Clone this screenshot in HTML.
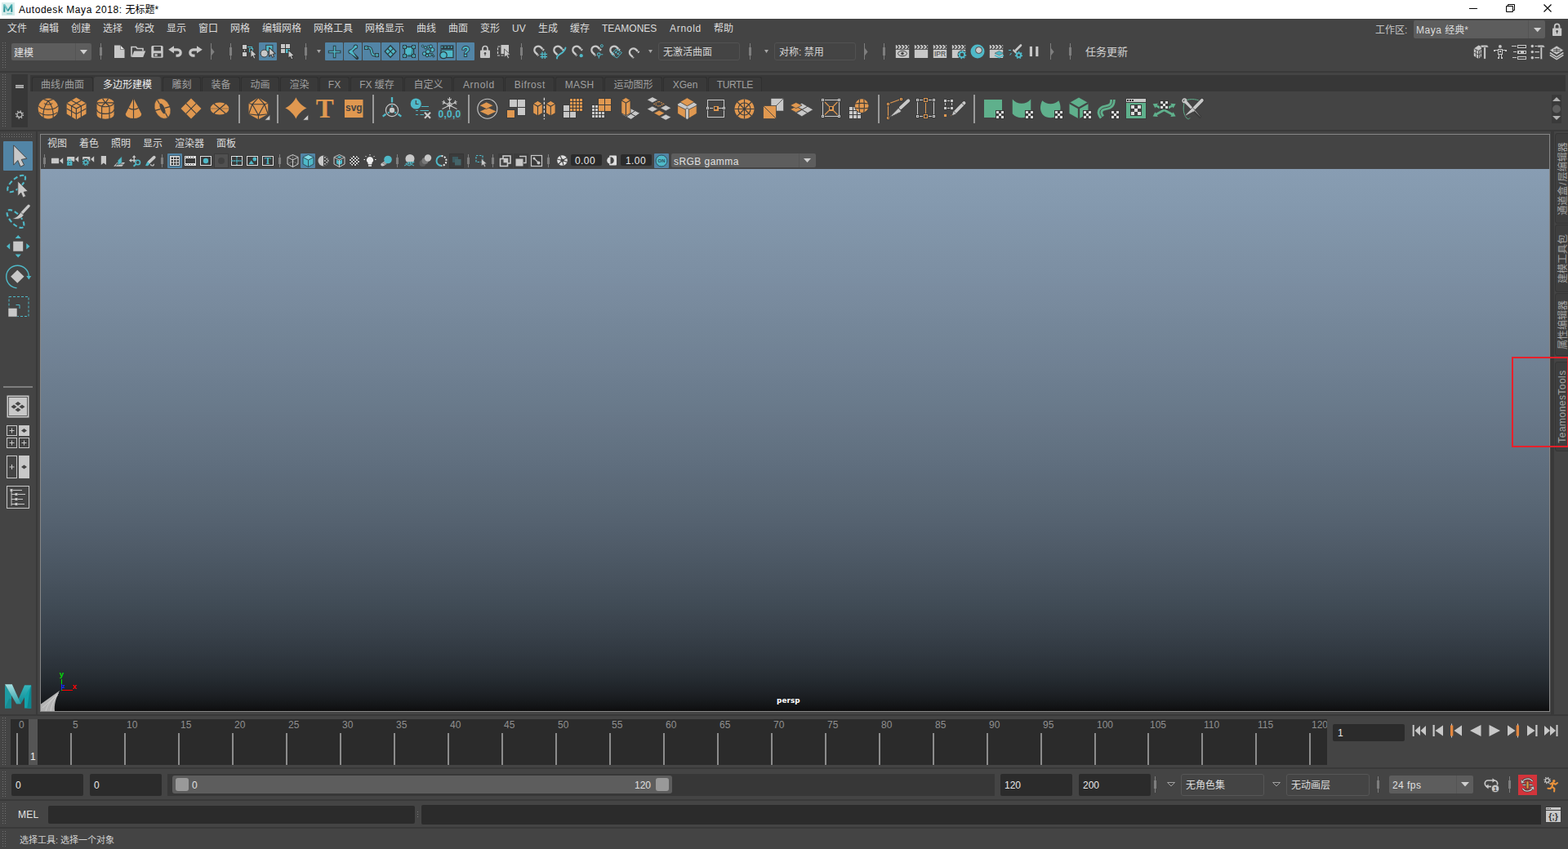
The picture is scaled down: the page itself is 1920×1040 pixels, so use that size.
<!DOCTYPE html>
<html lang="zh-CN">
<head>
<meta charset="utf-8">
<title>Autodesk Maya 2018: 无标题*</title>
<style>
html,body{margin:0;padding:0;}
body{width:1920px;height:1040px;overflow:hidden;background:#444444;font-family:"Liberation Sans","Noto Sans CJK SC",sans-serif;font-size:12px;color:#eeeeee;}
#app{position:relative;width:1920px;height:1040px;overflow:hidden;background:#444444;}
.a{position:absolute;}
.t{position:absolute;white-space:nowrap;line-height:16px;height:16px;font-size:12px;}
.box{position:absolute;box-sizing:border-box;}
svg{position:absolute;overflow:visible;}
.grip-v{position:absolute;width:5px;background-image:linear-gradient(180deg,transparent 1px,#444 1px),linear-gradient(90deg,transparent 1px,#727272 1px,#727272 2px,transparent 2px);background-size:3px 3px;}
.grip-h{position:absolute;height:5px;background-image:linear-gradient(180deg,transparent 1px,#444 1px,#444 3px,transparent 3px,transparent 4px,#444 4px),linear-gradient(90deg,transparent 1px,#727272 1px,#727272 2px,transparent 2px);background-size:3px 6px,3px 3px;}
.sep{position:absolute;background:#393939;height:3px;left:0;width:1920px;}
.field{position:absolute;background:#2b2b2b;border-radius:2px;}
.dd{position:absolute;background:#5d5d5d;border-radius:2px;}
.hl{position:absolute;background:#5285a6;border-radius:1px;}

</style>
</head>
<body>
<div id="app">
<!-- 01_title.gen.py -->
<div class="a" id="titlebar" style="left:0;top:0;width:1920px;height:23px;background:#ffffff;"></div>
<svg style="left:2px;top:3px" width="16" height="16" viewBox="0 0 16 16">
<defs><linearGradient id="mi" x1="0" y1="0" x2="0" y2="1"><stop offset="0" stop-color="#d9eeec"/><stop offset="1" stop-color="#d3eae8"/></linearGradient>
<linearGradient id="mi2" x1="0" y1="0" x2="0" y2="1"><stop offset="0" stop-color="#4fb3b6"/><stop offset="1" stop-color="#157f85"/></linearGradient></defs>
<rect x="0" y="0" width="16" height="16" fill="url(#mi)"/>
<path d="M2.300 11.800V2.300h1.800l3.700 6.300 3.700-6.300h1.800v9.500h-2V6.300L8.700 10.500H6.900L4.300 6.300v5.500z" fill="url(#mi2)"/>
<path d="M2.300 2.300h1.800l3.700 6.300-.9 1.900z" fill="#7cc9cb" opacity="0.800"/>
<rect x="6.200" y="13" width="7" height="1.500" fill="#7cc5c6" opacity="0.800"/>
</svg>
<span class="t" style="left:23px;top:4px;color:#000;font-size:12px"><span style="letter-spacing:0.55px">Autodesk Maya 2018: </span>无标题*</span>
<svg style="left:1790px;top:0" width="130" height="23" viewBox="0 0 130 23">
<path d="M9 10.5h10" stroke="#000" stroke-width="1" fill="none"/>
<path d="M54.5 7.5h8v7h-8z M56.5 7.5v-2h8v7h-2" stroke="#000" stroke-width="1" fill="none"/>
<path d="M100.5 5.5l9 9M109.5 5.5l-9 9" stroke="#000" stroke-width="1.1" fill="none"/>
</svg>
<div class="a" id="menubar" style="left:0;top:23px;width:1920px;height:24px;">
<span class="t" style="left:9px;top:4px;color:#dcdcdc">文件</span>
<span class="t" style="left:48px;top:4px;color:#dcdcdc">编辑</span>
<span class="t" style="left:87px;top:4px;color:#dcdcdc">创建</span>
<span class="t" style="left:126px;top:4px;color:#dcdcdc">选择</span>
<span class="t" style="left:165px;top:4px;color:#dcdcdc">修改</span>
<span class="t" style="left:204px;top:4px;color:#dcdcdc">显示</span>
<span class="t" style="left:243px;top:4px;color:#dcdcdc">窗口</span>
<span class="t" style="left:282px;top:4px;color:#dcdcdc">网格</span>
<span class="t" style="left:321px;top:4px;color:#dcdcdc">编辑网格</span>
<span class="t" style="left:384px;top:4px;color:#dcdcdc">网格工具</span>
<span class="t" style="left:447px;top:4px;color:#dcdcdc">网格显示</span>
<span class="t" style="left:510px;top:4px;color:#dcdcdc">曲线</span>
<span class="t" style="left:549px;top:4px;color:#dcdcdc">曲面</span>
<span class="t" style="left:588px;top:4px;color:#dcdcdc">变形</span>
<span class="t" style="left:627px;top:4px;color:#dcdcdc">UV</span>
<span class="t" style="left:659px;top:4px;color:#dcdcdc">生成</span>
<span class="t" style="left:698px;top:4px;color:#dcdcdc">缓存</span>
<span class="t" style="left:737px;top:4px;color:#dcdcdc">TEAMONES</span>
<span class="t" style="left:820px;top:4px;color:#dcdcdc"><span style="letter-spacing:0.7px">Arnold</span></span>
<span class="t" style="left:874px;top:4px;color:#dcdcdc">帮助</span>
</div>
<span class="t" style="left:1684px;top:29px;color:#c4c4c4">工作区:</span>
<div class="dd" style="left:1731px;top:25px;width:161px;height:22px;"></div>
<div class="a" style="left:1871px;top:25px;width:1px;height:22px;background:#545454"></div>
<span class="t" style="left:1734px;top:29px;color:#dcdcdc;font-size:12px"><span style="letter-spacing:0.5px">Maya </span>经典*</span>
<svg style="left:1878px;top:34px" width="10" height="6" viewBox="0 0 10 6"><path d="M0 0h9.300L4.650 5.200z" fill="#cfcfcf"/></svg>
<svg style="left:1900px;top:28px" width="13" height="17" viewBox="0 0 13 17">
<path d="M3.700 7V4.300a2.900 2.900 0 0 1 5.800 0V7" stroke="#c8c8c8" stroke-width="1.800" fill="none"/>
<rect x="1" y="6.500" width="11.200" height="9.500" rx="0.800" fill="#c8c8c8"/>
<circle cx="6.600" cy="10.200" r="1.200" fill="#444"/><rect x="6.100" y="10.400" width="1" height="2.800" fill="#444"/>
</svg>
<!-- 02_frame.gen.py -->
<div class="sep" style="top:87px;height:2px"></div>
<div class="sep" style="top:159px;height:2px"></div>
<div class="sep" style="top:875px;height:2px"></div>
<div class="sep" style="top:940px;height:2px"></div>
<div class="sep" style="top:979px;height:2px"></div>
<div class="sep" style="top:1013px;height:2px"></div>
<div class="grip-v" style="left:2px;top:52px;height:31px"></div>
<div class="grip-v" style="left:2px;top:91px;height:64px"></div>
<div class="grip-v" style="left:2px;top:879px;height:58px"></div>
<div class="grip-v" style="left:2px;top:945px;height:31px"></div>
<div class="grip-v" style="left:2px;top:984px;height:25px"></div>
<div class="grip-v" style="left:2px;top:1018px;height:19px"></div>
<div class="grip-h" style="left:1px;top:164px;width:39px;height:4px"></div>
<div class="a" style="left:44px;top:161px;width:2px;height:714px;background:#393939"></div>
<div class="a" style="left:1899px;top:161px;width:4px;height:714px;background:#393939"></div>
<div class="box" id="panel" style="left:49px;top:164px;width:1849px;height:708px;border:1px solid #868686;background:#444"></div>
<div class="a" id="viewport" style="left:50px;top:207px;width:1847px;height:664px;background:linear-gradient(to bottom,#889db3 0.00%,#869bb0 3.31%,#8499ae 6.58%,#8296ab 9.81%,#8094a8 13.00%,#7e91a5 16.14%,#7c8fa3 19.24%,#7a8ca0 22.29%,#788a9d 25.30%,#75879a 28.27%,#738597 31.19%,#718295 34.06%,#6f8092 36.89%,#6c7d8f 39.67%,#6a7b8c 42.41%,#687889 45.09%,#667586 47.73%,#637383 50.32%,#617080 52.86%,#5e6d7d 55.35%,#5c6a79 57.78%,#5a6876 60.17%,#576573 62.51%,#556270 64.79%,#525f6d 67.01%,#505c69 69.18%,#4d5966 71.30%,#4a5662 73.36%,#48535f 75.36%,#45505b 77.30%,#424d58 79.18%,#3f4a54 81.00%,#3d4650 82.76%,#3a434d 84.45%,#374049 86.07%,#343c45 87.63%,#313941 89.12%,#2e353d 90.53%,#2b3239 91.87%,#282e34 93.13%,#242a30 94.31%,#21262b 95.41%,#1e2227 96.41%,#1b1e22 97.32%,#171a1d 98.12%,#141618 98.82%,#111214 99.38%,#0f0f10 99.80%,#0d0d0d 100.00%)"></div>
<span class="t" style="left:951px;top:850px;color:#fff;font-weight:bold;font-size:8.8px;letter-spacing:0.1px;font-family:'DejaVu Sans','Liberation Sans',sans-serif">persp</span>
<!-- 03_status.gen.py -->
<div class="dd" style="left:14px;top:53px;width:98px;height:21px"></div>
<div class="a" style="left:92px;top:53px;width:1px;height:21px;background:#555"></div>
<span class="t" style="left:17px;top:57px;font-size:12px;color:#e0e0e0;">建模</span>
<svg style="left:98px;top:61px" width="9" height="6" viewBox="0 0 9 6" ><path d="M0 0h9L4.5 5.5z" fill="#d0d0d0"/></svg>
<div class="a" style="left:123px;top:53px;width:1px;height:20px;background:#7e7e7e"></div><div class="a" style="left:122px;top:58px;width:3px;height:10px;background:#7e7e7e"></div>
<svg style="left:139px;top:54px" width="15" height="18" viewBox="0 0 15 18" ><path d="M1 1.5h7.5l5 5V17H1z" fill="#c8c8c8"/><path d="M8.5 1.5v5h5z" fill="#e6e6e6" stroke="#555" stroke-width="0.6"/></svg>
<svg style="left:160px;top:55px" width="19" height="16" viewBox="0 0 19 16" ><path d="M1 14.5V2.5h5.5l1.5 2h7v3" fill="none" stroke="#c8c8c8" stroke-width="1.6"/><path d="M1.2 15l3-7.5h14l-3 7.5z" fill="#c8c8c8"/></svg>
<svg style="left:185px;top:55px" width="15" height="16" viewBox="0 0 15 16" ><rect x="0.3" y="1" width="14.4" height="14.7" rx="1.5" fill="#c8c8c8"/><rect x="3.3" y="2" width="8.7" height="5.3" fill="#444"/><rect x="3" y="10.3" width="9.3" height="4.2" fill="#444"/><rect x="4.3" y="11.3" width="3.4" height="2.3" fill="#c8c8c8"/></svg>
<svg style="left:206px;top:56px" width="18" height="14" viewBox="0 0 18 14" ><path d="M7 0.3L0.2 4.8l6.800 4.500z" fill="#c8c8c8"/><path d="M6 4.800h5.500a3.700 3.700 0 0 1 0 7.400H9.500" fill="none" stroke="#c8c8c8" stroke-width="3.200"/></svg>
<svg style="left:230px;top:56px" width="18" height="14" viewBox="0 0 18 14" ><path d="M11 0.3l6.800 4.500-6.800 4.500z" fill="#c8c8c8"/><path d="M12 4.800H6.500a3.700 3.700 0 0 0 0 7.400H8.500" fill="none" stroke="#c8c8c8" stroke-width="3.200"/></svg>
<div class="a" style="left:258px;top:53px;width:1px;height:20px;background:#7e7e7e"></div><svg style="left:259px;top:58.5px" width="4" height="9" viewBox="0 0 4 9" ><path d="M0 0L3.600 4.500L0 9z" fill="#7e7e7e"/></svg>
<div class="a" style="left:282px;top:53px;width:1px;height:20px;background:#7e7e7e"></div><div class="a" style="left:281px;top:58px;width:3px;height:10px;background:#7e7e7e"></div>
<svg style="left:296px;top:54px" width="19" height="19" viewBox="0 0 19 19" ><g shape-rendering="crispEdges"><rect x="0" y="0" width="7" height="7" fill="#3a3a3a"/><rect x="1" y="1" width="5" height="5" fill="#c8c8c8"/><rect x="0" y="9" width="7" height="7" fill="#3a3a3a"/><rect x="1" y="10" width="5" height="5" fill="#c8c8c8"/><rect x="3" y="7" width="1" height="2" fill="#c8c8c8"/><rect x="7" y="3" width="5" height="1" fill="#4fb9c8"/><rect x="12" y="3" width="1" height="2" fill="#4fb9c8"/><rect x="9" y="5" width="5" height="5" fill="#4fb9c8"/><rect x="10" y="6" width="3" height="3" fill="#444"/></g><g transform="translate(10.6,5.6) scale(0.46)"><path d="M0.7 0.9V25.1L5.8 19.5L9.1 27.3L13.6 25.1L10.2 18.4L16.9 17.2z" fill="#c8c8c8" stroke="#3a3a3a" stroke-width="2.200" stroke-linejoin="round"/></g></svg>
<div class="hl" style="left:317px;top:52px;width:22px;height:22px"></div>
<svg style="left:319px;top:54px" width="19" height="19" viewBox="0 0 19 19" ><rect x="6.700" y="1.300" width="8.200" height="7.800" fill="#4fb9c8" stroke="#3a3a3a" stroke-width="1"/><circle cx="4.600" cy="11.500" r="4.500" fill="#c8c8c8" stroke="#3a3a3a" stroke-width="1"/><g transform="translate(10.3,3.8) scale(0.46)"><path d="M0.7 0.9V25.1L5.8 19.5L9.1 27.3L13.6 25.1L10.2 18.4L16.9 17.2z" fill="#c8c8c8" stroke="#3a3a3a" stroke-width="2.200" stroke-linejoin="round"/></g></svg>
<svg style="left:343px;top:53px" width="19" height="21" viewBox="0 0 19 21" ><g shape-rendering="crispEdges"><rect x="0" y="0" width="7" height="7" fill="#3a3a3a"/><rect x="1" y="1" width="5" height="5" fill="#c8c8c8"/><rect x="6" y="0" width="7" height="7" fill="#3a3a3a"/><rect x="7" y="1" width="5" height="5" fill="#c8c8c8"/><rect x="0" y="6" width="7" height="7" fill="#3a3a3a"/><rect x="1" y="7" width="5" height="5" fill="#c8c8c8"/><rect x="6" y="6" width="7" height="7" fill="#3a3a3a"/><rect x="7" y="7" width="5" height="5" fill="#4fb9c8"/></g><g transform="translate(9.7,7.4) scale(0.46)"><path d="M0.7 0.9V25.1L5.8 19.5L9.1 27.3L13.6 25.1L10.2 18.4L16.9 17.2z" fill="#c8c8c8" stroke="#3a3a3a" stroke-width="2.200" stroke-linejoin="round"/></g></svg>
<div class="a" style="left:374px;top:53px;width:1px;height:20px;background:#7e7e7e"></div><div class="a" style="left:373px;top:58px;width:3px;height:10px;background:#7e7e7e"></div>
<svg style="left:388px;top:61px" width="5" height="4" viewBox="0 0 5 4" ><path d="M0 0h5L2.5 4z" fill="#a8a8a8"/></svg>
<div class="hl" style="left:398px;top:52px;width:22px;height:22px"></div>
<svg style="left:398px;top:52px" width="22" height="22" viewBox="0 0 22 22" ><path d="M11.600 3.700v15.600M3.800 11.500h15.600" stroke="#2c3a3f" stroke-width="3.600"/><path d="M11.600 4.700v13.600M4.800 11.500h13.600" stroke="#4fb9c8" stroke-width="1.600"/></svg>
<div class="hl" style="left:421px;top:52px;width:22px;height:22px"></div>
<svg style="left:421px;top:52px" width="22" height="22" viewBox="0 0 22 22" ><path d="M14.500 5.500L8.500 11.300 16.300 19.200" fill="none" stroke="#2c3a3f" stroke-width="3.800" stroke-linecap="round" stroke-linejoin="round"/><circle cx="14.500" cy="5.300" r="2.700" fill="#2c3a3f"/><circle cx="8.300" cy="11.300" r="2.900" fill="#2c3a3f"/><path d="M14.500 5.300L8.300 11.300" stroke="#4fb9c8" stroke-width="2" stroke-linecap="round"/><path d="M7 12.500l3-2.500 6.300 9.200z" fill="#4fb9c8"/><circle cx="14.500" cy="5.300" r="1.700" fill="#4fb9c8"/><circle cx="8.300" cy="11.300" r="1.900" fill="#4fb9c8"/></svg>
<div class="hl" style="left:444px;top:52px;width:22px;height:22px"></div>
<svg style="left:444px;top:52px" width="22" height="22" viewBox="0 0 22 22" ><path d="M6 6.500h2c4.500 0 1.500 9 6 9h2" fill="none" stroke="#2c3a3f" stroke-width="3.600"/><path d="M6 6.500h2c4.500 0 1.500 9 6 9h2" fill="none" stroke="#4fb9c8" stroke-width="1.600"/><g shape-rendering="crispEdges"><rect x="2" y="4" width="5" height="5" fill="#2c3a3f"/><rect x="3" y="5" width="3" height="3" fill="#4fb9c8"/><rect x="15" y="13" width="5" height="5" fill="#2c3a3f"/><rect x="16" y="14" width="3" height="3" fill="#4fb9c8"/><rect x="4" y="6" width="1" height="1" fill="#2c3a3f"/><rect x="17" y="15" width="1" height="1" fill="#2c3a3f"/></g></svg>
<div class="hl" style="left:467px;top:52px;width:22px;height:22px"></div>
<svg style="left:467px;top:52px" width="22" height="22" viewBox="0 0 22 22" ><path d="M11.100 3.800L18 11 11.100 18.200 4.200 11z" fill="#4fb9c8" stroke="#2c3a3f" stroke-width="1.300"/><path d="M7.600 7.400l7 7.200M14.600 7.400l-7 7.200" stroke="#2c3a3f" stroke-width="1.200"/></svg>
<div class="hl" style="left:490px;top:52px;width:22px;height:22px"></div>
<svg style="left:490px;top:52px" width="22" height="22" viewBox="0 0 22 22" ><rect x="5.500" y="5.500" width="11" height="11" fill="#4fb9c8" stroke="#2c3a3f" stroke-width="1.400"/><path d="M15.500 6.500l-1.500 8.500-8.500 1.500" fill="none" stroke="#35838f" stroke-width="1.600"/><g shape-rendering="crispEdges"><rect x="3" y="3" width="5" height="5" fill="#2c3a3f"/><rect x="4" y="4" width="3" height="3" fill="#4fb9c8"/><rect x="14" y="3" width="5" height="5" fill="#2c3a3f"/><rect x="15" y="4" width="3" height="3" fill="#4fb9c8"/><rect x="3" y="14" width="5" height="5" fill="#2c3a3f"/><rect x="4" y="15" width="3" height="3" fill="#4fb9c8"/><rect x="14" y="14" width="5" height="5" fill="#2c3a3f"/><rect x="15" y="15" width="3" height="3" fill="#4fb9c8"/><rect x="5" y="5" width="1" height="1" fill="#2c3a3f"/><rect x="16" y="5" width="1" height="1" fill="#2c3a3f"/><rect x="5" y="16" width="1" height="1" fill="#2c3a3f"/><rect x="16" y="16" width="1" height="1" fill="#2c3a3f"/></g></svg>
<div class="hl" style="left:513px;top:52px;width:22px;height:22px"></div>
<svg style="left:513px;top:52px" width="22" height="22" viewBox="0 0 22 22" ><g fill="#4fb9c8" stroke="#2c3a3f" stroke-width="1"><circle cx="4.500" cy="4.500" r="1.300"/><circle cx="8" cy="6.300" r="1.600"/><circle cx="11.500" cy="5.500" r="1.600"/><circle cx="14.500" cy="4.800" r="1.900"/><circle cx="16.500" cy="9" r="2.500"/><circle cx="11" cy="11.300" r="2.600"/><circle cx="6.500" cy="13.800" r="2.200"/><circle cx="10" cy="16" r="1.800"/><circle cx="13.500" cy="15.300" r="1.800"/><circle cx="16" cy="14.500" r="1.200"/><circle cx="17.800" cy="16.800" r="1.100"/></g></svg>
<div class="hl" style="left:536px;top:52px;width:22px;height:22px"></div>
<svg style="left:536px;top:52px" width="22" height="22" viewBox="0 0 22 22" ><rect x="3.500" y="3.500" width="16" height="4.500" fill="#2c3a3f"/><path d="M4.500 4.500l2.500 1.300-2.500 1.300zM8.500 4.500l2.500 1.300-2.500 1.300zM12.500 4.500l2.500 1.300-2.500 1.300zM16 4.500l2.500 1.300-2.500 1.300z" fill="#4fb9c8"/><rect x="4" y="9" width="15" height="9.500" fill="#4fb9c8" stroke="#2c3a3f" stroke-width="1.200"/><circle cx="7" cy="15.500" r="4.200" fill="#4fb9c8" stroke="#2c3a3f" stroke-width="1.200"/></svg>
<div class="hl" style="left:559px;top:52px;width:22px;height:22px"></div>
<svg style="left:559px;top:52px" width="22" height="22" viewBox="0 0 22 22" ><text x="11.300" y="17.200" font-family="Liberation Sans,sans-serif" font-size="16" font-weight="bold" text-anchor="middle" fill="#4fb9c8" stroke="#2c3a3f" stroke-width="1.800" paint-order="stroke">?</text></svg>
<svg style="left:588px;top:55px" width="12" height="16" viewBox="0 0 12 16" ><path d="M3 7V4.500a3 3 0 0 1 6 0V7" stroke="#c8c8c8" stroke-width="1.700" fill="none"/><rect x="0" y="6.500" width="12" height="9.500" rx="1" fill="#c8c8c8"/><circle cx="6" cy="10.300" r="1.200" fill="#444"/><rect x="5.500" y="10.500" width="1" height="2.800" fill="#444"/></svg>
<svg style="left:608px;top:54px" width="18" height="19" viewBox="0 0 18 19" ><rect x="5.500" y="1" width="9.500" height="11" fill="#c8c8c8"/><path d="M4.500 3H1.500v11h9" fill="none" stroke="#c8c8c8" stroke-width="1.200" stroke-dasharray="3 1.500"/><path d="M9.500 6l7.500 7-3.200.300 1.800 3.500-1.700.900-1.800-3.600-2.600 2.100z" fill="#c8c8c8" stroke="#444" stroke-width="0.800"/></svg>
<div class="a" style="left:638px;top:53px;width:1px;height:20px;background:#7e7e7e"></div><div class="a" style="left:637px;top:58px;width:3px;height:10px;background:#7e7e7e"></div>
<svg style="left:652px;top:54px" width="19" height="19" viewBox="0 0 19 19" ><g transform="translate(0,0)"><path d="M7.400 14.200L3.400 10.200A4.700 4.700 0 0 1 10 3.600L14 7.600" fill="none" stroke="#c8c8c8" stroke-width="2.400"/><path d="M5.300 13.500l2.500-2.500M11 6.500l2.500-2.500" stroke="#444" stroke-width="0.800" transform="translate(0.600,0.600)"/></g><path d="M12 9.500v8.500M15.300 9.500v8.500M9.500 12.300h8.500M9.500 15.500h8.500" stroke="#4fb9c8" stroke-width="1.300" fill="none"/></svg>
<svg style="left:676px;top:54px" width="19" height="19" viewBox="0 0 19 19" ><g transform="translate(0,0)"><path d="M7.400 14.200L3.400 10.200A4.700 4.700 0 0 1 10 3.600L14 7.600" fill="none" stroke="#c8c8c8" stroke-width="2.400"/><path d="M5.300 13.500l2.500-2.500M11 6.500l2.500-2.500" stroke="#444" stroke-width="0.800" transform="translate(0.600,0.600)"/></g><path d="M6 17.500c-.5-6 8.500-4.500 10.500-13" stroke="#4fb9c8" stroke-width="1.900" fill="none" stroke-linecap="round"/></svg>
<svg style="left:699px;top:54px" width="19" height="19" viewBox="0 0 19 19" ><g transform="translate(0,0)"><path d="M7.400 14.200L3.400 10.200A4.700 4.700 0 0 1 10 3.600L14 7.600" fill="none" stroke="#c8c8c8" stroke-width="2.400"/><path d="M5.300 13.500l2.500-2.500M11 6.500l2.500-2.500" stroke="#444" stroke-width="0.800" transform="translate(0.600,0.600)"/></g><circle cx="12.700" cy="14.200" r="2.100" fill="#4fb9c8"/></svg>
<svg style="left:722px;top:54px" width="19" height="19" viewBox="0 0 19 19" ><g transform="translate(0,0)"><path d="M7.400 14.200L3.400 10.200A4.700 4.700 0 0 1 10 3.600L14 7.600" fill="none" stroke="#c8c8c8" stroke-width="2.400"/><path d="M5.300 13.500l2.500-2.500M11 6.500l2.500-2.500" stroke="#444" stroke-width="0.800" transform="translate(0.600,0.600)"/></g><circle cx="14.900" cy="2.200" r="1.500" fill="none" stroke="#4fb9c8" stroke-width="1"/><circle cx="11.300" cy="12.700" r="1.800" fill="none" stroke="#4fb9c8" stroke-width="1.100"/><path d="M11.300 15v2.500M13.800 12.700h2.500" stroke="#4fb9c8" stroke-width="1.100"/></svg>
<svg style="left:745px;top:54px" width="19" height="19" viewBox="0 0 19 19" ><g transform="translate(0,0)"><path d="M7.400 14.200L3.400 10.200A4.700 4.700 0 0 1 10 3.600L14 7.600" fill="none" stroke="#c8c8c8" stroke-width="2.400"/><path d="M5.300 13.500l2.500-2.500M11 6.500l2.500-2.500" stroke="#444" stroke-width="0.800" transform="translate(0.600,0.600)"/></g><path d="M9.500 6l7 4.500-6 6.500-7-4.500z" fill="none" stroke="#4fb9c8" stroke-width="1"/><path d="M8 9.500l5.500 3.500M10.800 8l-2.800 3.500M13.500 9.800l-2.800 3.500" stroke="#4fb9c8" stroke-width="1"/></svg>
<svg style="left:768px;top:54px" width="19" height="19" viewBox="0 0 19 19" ><g transform="translate(0.5,2.8)"><path d="M7.400 14.200L3.400 10.200A4.700 4.700 0 0 1 10 3.600L14 7.600" fill="none" stroke="#c8c8c8" stroke-width="2.400"/><path d="M5.300 13.500l2.500-2.500M11 6.500l2.500-2.500" stroke="#444" stroke-width="0.800" transform="translate(0.600,0.600)"/></g></svg>
<svg style="left:794px;top:61px" width="5" height="4" viewBox="0 0 5 4" ><path d="M0 0h5L2.5 4z" fill="#a8a8a8"/></svg>
<div class="box" style="left:806px;top:52px;width:100px;height:22px;border:1px solid #525252;border-radius:3px"></div>
<span class="t" style="left:812px;top:56px;font-size:12px;color:#d4d4d4;">无激活曲面</span>
<div class="a" style="left:918px;top:53px;width:1px;height:20px;background:#7e7e7e"></div><div class="a" style="left:917px;top:58px;width:3px;height:10px;background:#7e7e7e"></div>
<svg style="left:936px;top:61px" width="5" height="4" viewBox="0 0 5 4" ><path d="M0 0h5L2.5 4z" fill="#a8a8a8"/></svg>
<div class="box" style="left:948px;top:52px;width:100px;height:22px;border:1px solid #525252;border-radius:3px"></div>
<span class="t" style="left:954px;top:56px;font-size:12px;color:#d4d4d4;">对称: 禁用</span>
<div class="a" style="left:1058px;top:53px;width:1px;height:20px;background:#7e7e7e"></div><svg style="left:1059px;top:58.5px" width="4" height="9" viewBox="0 0 4 9" ><path d="M0 0L3.600 4.500L0 9z" fill="#7e7e7e"/></svg>
<div class="a" style="left:1082px;top:53px;width:1px;height:20px;background:#7e7e7e"></div><div class="a" style="left:1081px;top:58px;width:3px;height:10px;background:#7e7e7e"></div>
<svg style="left:1096px;top:54px" width="18" height="18" viewBox="0 0 18 18" ><rect x="0.400" y="0.600" width="17.200" height="16.800" fill="#3c3c3c"/><rect x="0.800" y="1" width="16.400" height="4.900" fill="#c8c8c8"/><path d="M1.6 1h1.700l2.100 2.450-2.100 2.450h-1.700l2.100-2.450z" fill="#444"/><path d="M5.7 1h1.700l2.100 2.450-2.100 2.450h-1.700l2.100-2.450z" fill="#444"/><path d="M9.8 1h1.700l2.100 2.450-2.100 2.450h-1.700l2.100-2.450z" fill="#444"/><path d="M13.9 1h1.700l2.100 2.450-2.100 2.450h-1.700l2.100-2.450z" fill="#444"/><rect x="0.800" y="6.800" width="16.400" height="10.200" fill="#c8c8c8"/><ellipse cx="9" cy="11.500" rx="5.500" ry="3.200" fill="none" stroke="#444" stroke-width="1"/><circle cx="9" cy="11.500" r="1.800" fill="#444"/></svg>
<svg style="left:1119px;top:54px" width="18" height="18" viewBox="0 0 18 18" ><rect x="0.400" y="0.600" width="17.200" height="16.800" fill="#3c3c3c"/><rect x="0.800" y="1" width="16.400" height="4.900" fill="#c8c8c8"/><path d="M1.6 1h1.700l2.100 2.450-2.100 2.450h-1.700l2.100-2.450z" fill="#444"/><path d="M5.7 1h1.700l2.100 2.450-2.100 2.450h-1.700l2.100-2.450z" fill="#444"/><path d="M9.8 1h1.700l2.100 2.450-2.100 2.450h-1.700l2.100-2.450z" fill="#444"/><path d="M13.9 1h1.700l2.100 2.450-2.100 2.450h-1.700l2.100-2.450z" fill="#444"/><rect x="0.800" y="6.800" width="16.400" height="10.200" fill="#c8c8c8"/></svg>
<svg style="left:1142px;top:54px" width="18" height="18" viewBox="0 0 18 18" ><rect x="0.400" y="0.600" width="17.200" height="16.800" fill="#3c3c3c"/><rect x="0.800" y="1" width="16.400" height="4.900" fill="#c8c8c8"/><path d="M1.6 1h1.700l2.100 2.450-2.100 2.450h-1.700l2.100-2.450z" fill="#444"/><path d="M5.7 1h1.700l2.100 2.450-2.100 2.450h-1.700l2.100-2.450z" fill="#444"/><path d="M9.8 1h1.700l2.100 2.450-2.100 2.450h-1.700l2.100-2.450z" fill="#444"/><path d="M13.9 1h1.700l2.100 2.450-2.100 2.450h-1.700l2.100-2.450z" fill="#444"/><rect x="0.800" y="6.800" width="16.400" height="10.200" fill="#c8c8c8"/><text x="9" y="15.300" font-family="Liberation Sans,sans-serif" font-size="8.500" text-anchor="middle" fill="#3a3a3a">IPR</text></svg>
<svg style="left:1165px;top:54px" width="18" height="18" viewBox="0 0 18 18" ><rect x="0.400" y="0.600" width="17.200" height="16.800" fill="#3c3c3c"/><rect x="0.800" y="1" width="16.400" height="4.900" fill="#c8c8c8"/><path d="M1.6 1h1.700l2.100 2.450-2.100 2.450h-1.700l2.100-2.450z" fill="#444"/><path d="M5.7 1h1.700l2.100 2.450-2.100 2.450h-1.700l2.100-2.450z" fill="#444"/><path d="M9.8 1h1.700l2.100 2.450-2.100 2.450h-1.700l2.100-2.450z" fill="#444"/><path d="M13.9 1h1.700l2.100 2.450-2.100 2.450h-1.700l2.100-2.450z" fill="#444"/><rect x="0.800" y="6.800" width="16.400" height="10.200" fill="#c8c8c8"/><circle cx="13" cy="13" r="5.500" fill="#444"/><circle cx="13" cy="13" r="3.2" fill="none" stroke="#4fb9c8" stroke-width="2"/><circle cx="13" cy="13" r="4.5" fill="none" stroke="#4fb9c8" stroke-width="1.600" stroke-dasharray="1.500 1.950"/></svg>
<svg style="left:1188px;top:54px" width="18" height="18" viewBox="0 0 18 18" ><circle cx="9" cy="9" r="8.500" fill="#4fb9c8"/><circle cx="10.500" cy="7.500" r="4" fill="#c8c8c8" stroke="#444" stroke-width="1"/></svg>
<svg style="left:1211px;top:54px" width="18" height="18" viewBox="0 0 18 18" ><rect x="0.400" y="0.600" width="17.200" height="16.800" fill="#3c3c3c"/><rect x="0.800" y="1" width="16.400" height="4.900" fill="#c8c8c8"/><path d="M1.6 1h1.700l2.100 2.450-2.100 2.450h-1.700l2.100-2.450z" fill="#444"/><path d="M5.7 1h1.700l2.100 2.450-2.100 2.450h-1.700l2.100-2.450z" fill="#444"/><path d="M9.8 1h1.700l2.100 2.450-2.100 2.450h-1.700l2.100-2.450z" fill="#444"/><path d="M13.9 1h1.700l2.100 2.450-2.100 2.450h-1.700l2.100-2.450z" fill="#444"/><rect x="0.800" y="6.800" width="16.400" height="10.200" fill="#c8c8c8"/><path d="M12.500 8.500l5.500 2.700-5.500 2.700L7 11.200z" fill="#4fb9c8" stroke="#444" stroke-width="0.500"/><path d="M7 13.800l5.500 2.700 5.500-2.700" fill="none" stroke="#4fb9c8" stroke-width="1.700"/></svg>
<svg style="left:1234px;top:54px" width="19" height="18" viewBox="0 0 19 18" ><path d="M16 1.500l-6 6" stroke="#c8c8c8" stroke-width="2.600" stroke-linecap="round"/><path d="M7 6l4.500 4.500-2 1L6 8z" fill="#c8c8c8"/><path d="M1 7.500h3M2.500 13.500l2-2.500" stroke="#4fb9c8" stroke-width="1.100"/><circle cx="13.5" cy="13.5" r="2.6" fill="none" stroke="#4fb9c8" stroke-width="2"/><circle cx="13.5" cy="13.5" r="3.9000000000000004" fill="none" stroke="#4fb9c8" stroke-width="1.600" stroke-dasharray="1.500 1.950"/></svg>
<svg style="left:1260px;top:56px" width="12" height="14" viewBox="0 0 12 14" ><rect x="0.400" y="0.500" width="4" height="13" fill="#3c3c3c"/><rect x="7.800" y="0.500" width="4" height="13" fill="#3c3c3c"/><rect x="0.800" y="0.900" width="3.200" height="12.200" fill="#c8c8c8"/><rect x="8.200" y="0.900" width="3.200" height="12.200" fill="#c8c8c8"/></svg>
<div class="a" style="left:1286px;top:53px;width:1px;height:20px;background:#7e7e7e"></div><svg style="left:1287px;top:58.5px" width="4" height="9" viewBox="0 0 4 9" ><path d="M0 0L3.600 4.500L0 9z" fill="#7e7e7e"/></svg>
<div class="a" style="left:1310px;top:53px;width:1px;height:20px;background:#7e7e7e"></div><div class="a" style="left:1309px;top:58px;width:3px;height:10px;background:#7e7e7e"></div>
<span class="t" style="left:1329px;top:56px;font-size:13px;color:#d0d0d0;">任务更新</span>
<svg style="left:1804px;top:54px" width="20" height="19" viewBox="0 0 20 19" ><path d="M.8 5.500L6.500 1.500l3.500 1.600v12l-3.500 2.800L.8 14.500z" fill="#c8c8c8"/><path d="M.8 5.500l5.700 2.800 3.500-2M6.500 8.300v9.600M.8 10l5.700 3 3.500-2.200M3.600 6.900v9.300M8.300 7v9.500" stroke="#444" stroke-width="0.900" fill="none"/><path d="M9.300 1.200h7.800l1.900 2.900H9.300z" fill="#c8c8c8" stroke="#444" stroke-width="0.500"/><rect x="12.900" y="3.900" width="2.300" height="14.200" fill="#c8c8c8" stroke="#444" stroke-width="0.400"/></svg>
<svg style="left:1828px;top:54px" width="18" height="19" viewBox="0 0 18 19" ><circle cx="8.900" cy="2.900" r="1.900" fill="#c8c8c8"/><g shape-rendering="crispEdges"><rect x="3" y="7" width="12" height="1" fill="#c8c8c8"/><rect x="1" y="7" width="2" height="2" fill="#c8c8c8"/><rect x="15" y="7" width="2" height="2" fill="#c8c8c8"/><rect x="6" y="6" width="6" height="7" fill="#c8c8c8"/><rect x="7" y="7" width="4" height="5" fill="#444"/><rect x="8" y="8" width="2" height="2" fill="#c8c8c8"/><rect x="7" y="13" width="1" height="4" fill="#c8c8c8"/><rect x="10" y="13" width="1" height="4" fill="#c8c8c8"/><rect x="6" y="16" width="2" height="2" fill="#c8c8c8"/><rect x="10" y="16" width="2" height="2" fill="#c8c8c8"/></g></svg>
<svg style="left:1850px;top:54px" width="20" height="20" viewBox="0 0 20 20" ><g shape-rendering="crispEdges"><rect x="1" y="2" width="6" height="1" fill="#c8c8c8"/><rect x="8" y="1" width="11" height="4" fill="#c8c8c8"/><rect x="9" y="2" width="9" height="2" fill="#444"/><rect x="3" y="9" width="4" height="1" fill="#c8c8c8"/><rect x="8" y="8" width="11" height="4" fill="#c8c8c8"/><rect x="10" y="9" width="2" height="2" fill="#444"/><rect x="16" y="9" width="2" height="2" fill="#444"/><rect x="2" y="16" width="5" height="1" fill="#c8c8c8"/><rect x="8" y="15" width="11" height="4" fill="#c8c8c8"/><rect x="9" y="16" width="9" height="2" fill="#444"/></g></svg>
<svg style="left:1874px;top:54px" width="20" height="20" viewBox="0 0 20 20" ><g fill="#c8c8c8"><circle cx="2.300" cy="2.500" r="1.700"/><circle cx="2.300" cy="9.600" r="1.700"/><circle cx="2.300" cy="16.700" r="1.700"/></g><path d="M5.400 2.500h3.500M5.400 9.600h5.500M5.400 16.700h5.500" stroke="#c8c8c8" stroke-width="1.200"/><path d="M8.800 1.200h7.200l2 2.800H8.800z" fill="#c8c8c8" stroke="#444" stroke-width="0.500"/><rect x="12.100" y="3.900" width="2.300" height="14.600" fill="#c8c8c8" stroke="#444" stroke-width="0.400"/></svg>
<svg style="left:1897px;top:54px" width="19" height="20" viewBox="0 0 19 20" ><path d="M.8 13.300l8.300 5.300 8.300-5.300M.8 10.500l8.300 5.300 8.300-5.300" fill="none" stroke="#c8c8c8" stroke-width="1.500"/><path d="M9.100 2.100l8.400 5.500-8.400 5.500L.7 7.600z" fill="#c8c8c8" stroke="#444" stroke-width="0.600"/><path d="M5 6.700h8.500M5 8.700h8.500M9.100 5v5.300" stroke="#444" stroke-width="0.900"/></svg>
<!-- 04_shelf.gen.py -->
<div class="a" style="left:14px;top:91px;width:20px;height:65px;background:#373737"></div>
<svg style="left:19px;top:103px" width="10" height="6" viewBox="0 0 10 6" ><rect x="0" y="1" width="10" height="1.700" fill="#b8b8b8"/><rect x="0" y="3.300" width="10" height="1.700" fill="#b8b8b8"/></svg>
<svg style="left:18px;top:135px" width="12" height="12" viewBox="0 0 12 12" ><circle cx="6" cy="5.500" r="3" fill="none" stroke="#bcbcbc" stroke-width="1.300"/><circle cx="6" cy="5.500" r="4.500" fill="none" stroke="#bcbcbc" stroke-width="1.400" stroke-dasharray="1.400 2.130"/></svg>
<div class="a" style="left:37px;top:92px;width:1880px;height:20px;background:#373737"></div>
<div class="box" style="left:39px;top:94px;width:75px;height:18px;background:#393939;border:1px solid #2f2f2f;border-bottom:none;border-radius:3px 3px 0 0;text-align:center;line-height:19px;color:#a0a0a0;font-size:12px">曲线<span style="padding:0 0.8px">/</span>曲面</div>
<div class="box" style="left:115px;top:94px;width:82px;height:19px;background:#444;border-radius:3px 3px 0 0;text-align:center;line-height:21px;color:#eeeeee;font-size:12px">多边形建模</div>
<div class="box" style="left:199px;top:94px;width:47px;height:18px;background:#393939;border:1px solid #2f2f2f;border-bottom:none;border-radius:3px 3px 0 0;text-align:center;line-height:19px;color:#a0a0a0;font-size:12px">雕刻</div>
<div class="box" style="left:247px;top:94px;width:47px;height:18px;background:#393939;border:1px solid #2f2f2f;border-bottom:none;border-radius:3px 3px 0 0;text-align:center;line-height:19px;color:#a0a0a0;font-size:12px">装备</div>
<div class="box" style="left:295px;top:94px;width:47px;height:18px;background:#393939;border:1px solid #2f2f2f;border-bottom:none;border-radius:3px 3px 0 0;text-align:center;line-height:19px;color:#a0a0a0;font-size:12px">动画</div>
<div class="box" style="left:343px;top:94px;width:47px;height:18px;background:#393939;border:1px solid #2f2f2f;border-bottom:none;border-radius:3px 3px 0 0;text-align:center;line-height:19px;color:#a0a0a0;font-size:12px">渲染</div>
<div class="box" style="left:391px;top:94px;width:37px;height:18px;background:#393939;border:1px solid #2f2f2f;border-bottom:none;border-radius:3px 3px 0 0;text-align:center;line-height:19px;color:#a0a0a0;font-size:12px">FX</div>
<div class="box" style="left:429px;top:94px;width:65px;height:18px;background:#393939;border:1px solid #2f2f2f;border-bottom:none;border-radius:3px 3px 0 0;text-align:center;line-height:19px;color:#a0a0a0;font-size:12px">FX 缓存</div>
<div class="box" style="left:495px;top:94px;width:59px;height:18px;background:#393939;border:1px solid #2f2f2f;border-bottom:none;border-radius:3px 3px 0 0;text-align:center;line-height:19px;color:#a0a0a0;font-size:12px">自定义</div>
<div class="box" style="left:555px;top:94px;width:62px;height:18px;background:#393939;border:1px solid #2f2f2f;border-bottom:none;border-radius:3px 3px 0 0;text-align:center;line-height:19px;color:#a0a0a0;font-size:12px"><span style="letter-spacing:0.7px;margin-right:-0.7px">Arnold</span></div>
<div class="box" style="left:618px;top:94px;width:61px;height:18px;background:#393939;border:1px solid #2f2f2f;border-bottom:none;border-radius:3px 3px 0 0;text-align:center;line-height:19px;color:#a0a0a0;font-size:12px"><span style="letter-spacing:0.6px;margin-right:-0.6px">Bifrost</span></div>
<div class="box" style="left:680px;top:94px;width:59px;height:18px;background:#393939;border:1px solid #2f2f2f;border-bottom:none;border-radius:3px 3px 0 0;text-align:center;line-height:19px;color:#a0a0a0;font-size:12px"><span style="letter-spacing:0.3px;margin-right:-0.3px">MASH</span></div>
<div class="box" style="left:740px;top:94px;width:71px;height:18px;background:#393939;border:1px solid #2f2f2f;border-bottom:none;border-radius:3px 3px 0 0;text-align:center;line-height:19px;color:#a0a0a0;font-size:12px">运动图形</div>
<div class="box" style="left:812px;top:94px;width:54px;height:18px;background:#393939;border:1px solid #2f2f2f;border-bottom:none;border-radius:3px 3px 0 0;text-align:center;line-height:19px;color:#a0a0a0;font-size:12px">XGen</div>
<div class="box" style="left:867px;top:94px;width:66px;height:18px;background:#393939;border:1px solid #2f2f2f;border-bottom:none;border-radius:3px 3px 0 0;text-align:center;line-height:19px;color:#a0a0a0;font-size:12px"><span style="letter-spacing:-0.4px;margin-right:0.4px">TURTLE</span></div>
<svg style="left:46px;top:120px" width="26" height="26" viewBox="0 0 26 26" ><circle cx="13.1" cy="13" r="12.4" fill="#e09850"/><path d="M1.300 9.800C5 15.500 21 15.500 24.900 9.800M2.200 17.600C7 22 19 22 24 17.600M8 6.600C10 8.400 16 8.400 18.200 6.600M13.100 3.600C9 8 6.500 14 7 24M13.100 3.600C17 8 19.700 14 19.200 24M13.100 3.600L7.600 1.800M13.100 3.600L18.600 1.800" stroke="#3e3e3e" stroke-width="1.150" fill="none"/></svg>
<svg style="left:81px;top:119px" width="26" height="28" viewBox="0 0 26 28" ><path d="M12.400 .5L24.500 7.400V20.600L12.400 27.400.7 20.600V7.400z" fill="#e09850"/><path d="M.7 7.400L12.400 14.100 24.500 7.400M12.400 14.100V27.400M6.600 4L18.400 10.800V24M18.400 4L6.600 10.800V24M.7 14L12.400 20.700 24.500 14" stroke="#3e3e3e" stroke-width="1.150" fill="none"/></svg>
<svg style="left:118px;top:120px" width="23" height="26" viewBox="0 0 23 26" ><path d="M.6 5.600a10.500 5.100 0 0 1 21 0v15a10.500 5.100 0 0 1-21 0z" fill="#e09850"/><path d="M.6 5.600a10.500 5.100 0 0 0 21 0M.6 14.300a10.500 5.100 0 0 0 21 0M6.600 10v15.500M16 10v15.500M.6 5.800h21M11.100 5.800L7.600 .8M11.100 5.800L14.600 .8M11.100 5.800L6.600 10M11.100 5.800L16 10" stroke="#3e3e3e" stroke-width="1.150" fill="none"/></svg>
<svg style="left:153px;top:120px" width="21" height="26" viewBox="0 0 21 26" ><path d="M10.500 .3L20.300 19.800a9.800 5.300 0 0 1-19.600 0z" fill="#e09850"/><path d="M10.500 .5v25M4.500 12.300c3.500 2.500 8.500 2.500 12 0" stroke="#3e3e3e" stroke-width="1.150" fill="none"/></svg>
<svg style="left:188px;top:120px" width="22" height="26" viewBox="0 0 22 26" ><g transform="rotate(-24 11 13)"><ellipse cx="11" cy="13" rx="9.300" ry="12.800" fill="#e09850" stroke="#444" stroke-width="0.500"/><ellipse cx="11" cy="13" rx="2.600" ry="6.800" fill="#444"/><path d="M9.500 .8l.5 5.800M12 19.500l.5 5.800M1.800 11.500l6.600 1M13.600 13.500l6.600 1" stroke="#3e3e3e" stroke-width="1.150" fill="none"/></g></svg>
<svg style="left:221px;top:120px" width="26" height="26" viewBox="0 0 26 26" ><path d="M13 .5L25.500 13 13 25.500.5 13z" fill="#e09850"/><path d="M6.700 6.700l12.600 12.600M19.300 6.700L6.700 19.300" stroke="#3e3e3e" stroke-width="1.150" fill="none"/></svg>
<svg style="left:257px;top:125px" width="24" height="16" viewBox="0 0 24 16" ><ellipse cx="12" cy="8" rx="11.300" ry="7.600" fill="#e09850"/><path d="M.7 8h22.600" stroke="#444" stroke-width="1" opacity="0.500" fill="none"/><path d="M5 2.200l14 11.600M19 2.200L5 13.800" stroke="#3e3e3e" stroke-width="1.150" fill="none"/></svg>
<svg style="left:304px;top:119px" width="27" height="29" viewBox="0 0 27 29" ><path d="M12.400 .6L24.200 7.500V20.800L12.400 27.300.6 20.800V7.500z" fill="#e09850"/><path d="M12.400 .6L4.900 8.750h15zM4.900 8.750L12.400 22.100 19.900 8.750M.6 7.500l4.300 1.250M24.200 7.500l-4.300 1.250M.6 20.800L4.900 8.750M24.200 20.800L19.900 8.750M.6 20.800L12.400 22.100l11.800-1.300M12.400 22.100v5.200" stroke="#3e3e3e" stroke-width="1.150" fill="none"/><path d="M20 28.300h6.800v-6.800z" fill="#c8c8c8" stroke="#444" stroke-width="0.800"/></svg>
<svg style="left:349px;top:119px" width="29" height="29" viewBox="0 0 29 29" ><path d="M13.40 0.30C14.90 4.80 22.00 11.90 26.50 13.40C22.00 14.90 14.90 22.00 13.40 26.50C11.90 22.00 4.80 14.90 0.30 13.40C4.80 11.90 11.90 4.80 13.40 0.30z" fill="#e09850"/><path d="M21.600 28.300h7.100v-7.100z" fill="#c8c8c8" stroke="#444" stroke-width="0.800"/></svg>
<svg style="left:387px;top:121px" width="22" height="24" viewBox="0 0 22 24" ><text x="10.700" y="23.200" font-family="Liberation Serif,serif" font-size="33" font-weight="bold" text-anchor="middle" fill="#e09850">T</text></svg>
<svg style="left:422px;top:122px" width="23" height="22" viewBox="0 0 23 22" ><rect x="0" y="0" width="22.500" height="22" fill="#e09850"/><text x="11.300" y="13.900" font-family="Liberation Sans,sans-serif" font-size="12" font-weight="bold" text-anchor="middle" fill="#444">svg</text></svg>
<svg style="left:468px;top:119px" width="24" height="25" viewBox="0 0 24 25" ><path d="M12 0v6.500M4.500 20.800L.7 23.600M19.500 20.800l3.800 2.800" stroke="#4fb9c8" stroke-width="2.300" fill="none"/><circle cx="12" cy="16" r="7.600" fill="none" stroke="#c8c8c8" stroke-width="1.200"/><circle cx="12" cy="16" r="3.200" fill="#c8c8c8"/><path d="M12 10v1.800M8.700 18.400l-1.600 1.200M15.300 18.400l1.600 1.200" stroke="#4fb9c8" stroke-width="2"/></svg>
<svg style="left:502px;top:120px" width="27" height="26" viewBox="0 0 27 26" ><circle cx="7.300" cy="7" r="6.600" fill="#4fb9c8"/><path d="M7.300 3v4.500h3.200" stroke="#444" stroke-width="1.200" fill="none"/><path d="M14 10.500h9M7 15.500h3M12.500 15.500h10.500M7 20.500h3M12.500 20.500h4.500" stroke="#4fb9c8" stroke-width="1.200"/><path d="M18 17.700l7 7M25 17.700l-7 7" stroke="#ccc" stroke-width="2.100"/></svg>
<svg style="left:537px;top:119px" width="27" height="27" viewBox="0 0 27 27" ><g stroke="#c8c8c8" stroke-width="1.100" fill="none"><path d="M13.500 0v15.500M4.500 5.500l18 9M22.500 5.500l-18 9"/><path d="M11.300 2l2.200 2.200L15.700 2M4.800 8.500L7.500 7 6.200 4M22.200 8.500L19.500 7l1.300-3M10.500 10l3 1.500 3-1.500M11 8.500l2.500-2 2.500 2"/></g><rect x="-1" y="15.500" width="29" height="12.500" fill="#4a4a4a"/><text x="13.500" y="25.300" font-family="Liberation Sans,sans-serif" font-size="12" font-weight="bold" text-anchor="middle" letter-spacing="0.300" fill="#4fb9c8">0,0,0</text></svg>
<svg style="left:584px;top:120px" width="26" height="26" viewBox="0 0 26 26" ><circle cx="12.800" cy="13.200" r="12" fill="none" stroke="#c8c8c8" stroke-width="1.100"/><path d="M13.700 11.900l9.800 4.600-9.800 4.600-9.800-4.600z" fill="#e09850"/><path d="M11.600 5l8.500 4.300-8.500 4.300-8.500-4.300z" fill="#e09850" stroke="#444" stroke-width="0.700"/></svg>
<svg style="left:620px;top:121px" width="24" height="24" viewBox="0 0 24 24" ><g shape-rendering="crispEdges"><rect x="3" y="0" width="11" height="11" fill="#3c3c3c"/><rect x="4" y="1" width="9" height="9" fill="#c8c8c8"/><rect x="13" y="0" width="11" height="11" fill="#3c3c3c"/><rect x="14" y="1" width="9" height="9" fill="#c8c8c8"/><rect x="13" y="10" width="11" height="11" fill="#3c3c3c"/><rect x="14" y="11" width="9" height="9" fill="#c8c8c8"/><rect x="0" y="13" width="11" height="11" fill="#3c3c3c"/><rect x="1" y="14" width="9" height="9" fill="#e09850"/></g></svg>
<svg style="left:652px;top:119px" width="29" height="28" viewBox="0 0 29 28" ><path d="M6.5 4.500l5.800 3.400v11.600l-5.800 3.400-5.800-3.400V7.900z" fill="#e09850" stroke="#3c3c3c" stroke-width="0.900"/><path d="M0.7 7.900l5.800 3.400 5.800-3.400M6.5 11.300v11.600" stroke="#3c3c3c" stroke-width="1.100" fill="none"/><path d="M22.3 4.500l5.800 3.400v11.600l-5.800 3.400-5.800-3.400V7.900z" fill="#e09850" stroke="#3c3c3c" stroke-width="0.900"/><path d="M16.5 7.900l5.800 3.400 5.800-3.400M22.3 11.300v11.600" stroke="#3c3c3c" stroke-width="1.100" fill="none"/><path d="M14.400 .8v26.500" stroke="#d8d8d8" stroke-width="1.300" stroke-dasharray="3.200 1.800"/></svg>
<svg style="left:689px;top:120px" width="25" height="25" viewBox="0 0 25 25" ><g shape-rendering="crispEdges"><rect x="0" y="8" width="9" height="9" fill="#3c3c3c"/><rect x="1" y="9" width="7" height="7" fill="#c8c8c8"/><rect x="0" y="16" width="9" height="9" fill="#3c3c3c"/><rect x="1" y="17" width="7" height="7" fill="#c8c8c8"/><rect x="8" y="16" width="9" height="9" fill="#3c3c3c"/><rect x="9" y="17" width="7" height="7" fill="#c8c8c8"/><rect x="8" y="0" width="17" height="17" fill="#3c3c3c"/><rect x="9" y="1" width="3" height="3" fill="#e09850"/><rect x="13" y="1" width="3" height="3" fill="#e09850"/><rect x="17" y="1" width="3" height="3" fill="#e09850"/><rect x="21" y="1" width="3" height="3" fill="#e09850"/><rect x="9" y="5" width="3" height="3" fill="#e09850"/><rect x="13" y="5" width="3" height="3" fill="#e09850"/><rect x="17" y="5" width="3" height="3" fill="#e09850"/><rect x="21" y="5" width="3" height="3" fill="#e09850"/><rect x="9" y="9" width="3" height="3" fill="#e09850"/><rect x="13" y="9" width="3" height="3" fill="#e09850"/><rect x="17" y="9" width="3" height="3" fill="#e09850"/><rect x="21" y="9" width="3" height="3" fill="#e09850"/><rect x="9" y="13" width="3" height="3" fill="#e09850"/><rect x="13" y="13" width="3" height="3" fill="#e09850"/><rect x="17" y="13" width="3" height="3" fill="#e09850"/><rect x="21" y="13" width="3" height="3" fill="#e09850"/></g></svg>
<svg style="left:724px;top:120px" width="25" height="25" viewBox="0 0 25 25" ><g shape-rendering="crispEdges"><rect x="0" y="8" width="17" height="17" fill="#3c3c3c"/><rect x="1" y="9" width="3" height="3" fill="#c8c8c8"/><rect x="5" y="9" width="3" height="3" fill="#c8c8c8"/><rect x="9" y="9" width="3" height="3" fill="#c8c8c8"/><rect x="13" y="9" width="3" height="3" fill="#c8c8c8"/><rect x="1" y="13" width="3" height="3" fill="#c8c8c8"/><rect x="5" y="13" width="3" height="3" fill="#c8c8c8"/><rect x="9" y="13" width="3" height="3" fill="#c8c8c8"/><rect x="13" y="13" width="3" height="3" fill="#c8c8c8"/><rect x="1" y="17" width="3" height="3" fill="#c8c8c8"/><rect x="5" y="17" width="3" height="3" fill="#c8c8c8"/><rect x="9" y="17" width="3" height="3" fill="#c8c8c8"/><rect x="13" y="17" width="3" height="3" fill="#c8c8c8"/><rect x="1" y="21" width="3" height="3" fill="#c8c8c8"/><rect x="5" y="21" width="3" height="3" fill="#c8c8c8"/><rect x="9" y="21" width="3" height="3" fill="#c8c8c8"/><rect x="13" y="21" width="3" height="3" fill="#c8c8c8"/><rect x="8" y="0" width="17" height="17" fill="#3c3c3c"/><rect x="9" y="1" width="7" height="7" fill="#e09850"/><rect x="17" y="1" width="7" height="7" fill="#e09850"/><rect x="9" y="9" width="7" height="7" fill="#e09850"/><rect x="17" y="9" width="7" height="7" fill="#e09850"/></g></svg>
<svg style="left:760px;top:119px" width="25" height="28" viewBox="0 0 25 28" ><path d="M11.800 13.600L23.700 19.600 12.700 27.300 1.200 21z" fill="#c8c8c8" stroke="#3c3c3c" stroke-width="0.800"/><path d="M6.500 17.200l11.700 6.200M17.700 16.600L7 24" stroke="#3c3c3c" stroke-width="1" fill="none"/><path d="M6.400 .6L12 3.750V19.600L6.400 22.700.8 19.600V3.750z" fill="#e09850" stroke="#3c3c3c" stroke-width="0.800"/><path d="M.8 3.750L6.400 7.100 12 3.750M6.400 7.100V22.700" stroke="#3c3c3c" stroke-width="1.100" fill="none"/></svg>
<svg style="left:791px;top:118px" width="32" height="30" viewBox="0 0 32 30" ><path d="M7.9 0.6999999999999997l6.800 3.600-6.800 3.600-6.800-3.600z" fill="#c8c8c8" stroke="#3c3c3c" stroke-width="0.700" /><path d="M7.9 12.0l6.800 3.600-6.800 3.600-6.800-3.600z" fill="#c8c8c8" stroke="#3c3c3c" stroke-width="0.700" /><path d="M24.2 10.700000000000001l6.800 3.600-6.800 3.600-6.800-3.600z" fill="#c8c8c8" stroke="#3c3c3c" stroke-width="0.700" /><path d="M24.2 22.0l6.800 3.600-6.800 3.600-6.800-3.600z" fill="#c8c8c8" stroke="#3c3c3c" stroke-width="0.700" /><path d="M16.2 17.0l6.800 3.600-6.800 3.600-6.800-3.600z" fill="#e09850" stroke="#3c3c3c" stroke-width="0.700" /><path d="M15.800 6.200l5.800 3.100-5.800 3.100-5.800-3.100z" fill="none" stroke="#e09850" stroke-width="1.100" stroke-dasharray="1.600 1.100"/></svg>
<svg style="left:829px;top:119px" width="25" height="28" viewBox="0 0 25 28" ><path d="M12.400 .6L24.300 8.600V20.200L12.400 27.400.5 20.200V8.600z" fill="#c8c8c8" stroke="#3c3c3c" stroke-width="0.800"/><path d="M12.400 .8L21.300 5.800 12.400 10.900 3.500 5.800z" fill="#e09850" stroke="#3c3c3c" stroke-width="0.800"/><path d="M.6 10.300L10.400 15.200V26L.6 20.100z" fill="#e09850" stroke="#3c3c3c" stroke-width="0.800"/><path d="M24.200 10.300L14.400 15.200V26l9.800-5.900z" fill="#e09850" stroke="#3c3c3c" stroke-width="0.800"/><path d="M10.400 15.200l2-2.300 2 2.300" fill="none" stroke="#3c3c3c" stroke-width="0.800"/></svg>
<svg style="left:865px;top:121px" width="24" height="24" viewBox="0 0 24 24" ><g shape-rendering="crispEdges"><rect x="1.500" y="1.500" width="20" height="21" fill="none" stroke="#c8c8c8" stroke-width="1"/><rect x="2" y="11" width="19" height="1" fill="#c8c8c8"/><rect x="-0.500" y="9.500" width="4" height="4" fill="#3c3c3c"/><rect x="0.500" y="10.500" width="2" height="2" fill="#3c3c3c" stroke="#c8c8c8" stroke-width="1"/><rect x="19.500" y="9.500" width="4" height="4" fill="#3c3c3c"/><rect x="20.500" y="10.500" width="2" height="2" fill="#3c3c3c" stroke="#c8c8c8" stroke-width="1"/><rect x="8" y="8" width="7" height="7" fill="#444"/><rect x="9.500" y="9.500" width="4" height="4" fill="#3c3c3c" stroke="#e09850" stroke-width="1"/><rect x="9" y="9" width="5" height="5" fill="none" stroke="#e09850" stroke-width="1"/></g></svg>
<svg style="left:899px;top:121px" width="25" height="25" viewBox="0 0 25 25" ><circle cx="12.500" cy="12.500" r="12" fill="#e09850"/><circle cx="12.500" cy="12.500" r="7.500" stroke="#3e3e3e" stroke-width="1.150" fill="none"/><path d="M12.500 .5v24M.5 12.500h24M4 4l17 17M21 4L4 21" stroke="#3e3e3e" stroke-width="1.150" fill="none"/></svg>
<svg style="left:934px;top:120px" width="26" height="26" viewBox="0 0 26 26" ><rect x="10" y="0.500" width="15.500" height="15.500" fill="#c8c8c8" stroke="#444" stroke-width="0.600"/><path d="M10 16L25.500 .5" stroke="#444" stroke-width="0.800"/><rect x="0.500" y="9.500" width="16" height="16" fill="#e09850" stroke="#444" stroke-width="0.800"/><path d="M.5 9.500l16 16" stroke="#444" stroke-width="0.900"/></svg>
<svg style="left:967px;top:125px" width="30" height="19" viewBox="0 0 30 19" ><path d="M14.800 1.200L28.800 9.300 14.800 17.700 1.200 9.300z" fill="#c8c8c8" stroke="#3c3c3c" stroke-width="0.700"/><path d="M8 5.300l13.800 8.200M21.800 5.300L8 13.500" stroke="#3c3c3c" stroke-width="1" fill="none"/><path d="M7.750 5.400l7.300 3.500-7.300 3.700-7.300-3.700z" fill="#e09850" stroke="#3c3c3c" stroke-width="0.700"/><path d="M7.750 .5l7.300 3.500-7.300 3.700L.450 4z" fill="#e09850" stroke="#3c3c3c" stroke-width="0.700"/></svg>
<svg style="left:1005px;top:120px" width="25" height="25" viewBox="0 0 25 25" ><path d="M5 5l5 5M20.500 5l-5 5M5 20.500l5-5M20.500 20.500l-5-5" stroke="#e09850" stroke-width="1.200" fill="none"/><g shape-rendering="crispEdges"><rect x="2.500" y="2.500" width="20" height="20" fill="none" stroke="#c8c8c8" stroke-width="1"/><rect x="0.5" y="0.5" width="4" height="4" fill="#3c3c3c"/><rect x="1.5" y="1.5" width="2" height="2" fill="#3c3c3c" stroke="#c8c8c8" stroke-width="1"/><rect x="20.5" y="0.5" width="4" height="4" fill="#3c3c3c"/><rect x="21.5" y="1.5" width="2" height="2" fill="#3c3c3c" stroke="#c8c8c8" stroke-width="1"/><rect x="0.5" y="20.5" width="4" height="4" fill="#3c3c3c"/><rect x="1.5" y="21.5" width="2" height="2" fill="#3c3c3c" stroke="#c8c8c8" stroke-width="1"/><rect x="20.5" y="20.5" width="4" height="4" fill="#3c3c3c"/><rect x="21.5" y="21.5" width="2" height="2" fill="#3c3c3c" stroke="#c8c8c8" stroke-width="1"/><rect x="10.500" y="10.500" width="4" height="4" fill="#3c3c3c" stroke="#e09850" stroke-width="1"/><rect x="10" y="10" width="5" height="5" fill="none" stroke="#e09850" stroke-width="1"/></g></svg>
<svg style="left:1039px;top:121px" width="25" height="25" viewBox="0 0 25 25" ><g shape-rendering="crispEdges"><rect x="0" y="9" width="16" height="16" fill="#3c3c3c"/><rect x="1" y="10" width="4" height="4" fill="#c8c8c8"/><rect x="6" y="10" width="4" height="4" fill="#c8c8c8"/><rect x="11" y="10" width="4" height="4" fill="#c8c8c8"/><rect x="1" y="15" width="4" height="4" fill="#c8c8c8"/><rect x="6" y="15" width="4" height="4" fill="#c8c8c8"/><rect x="11" y="15" width="4" height="4" fill="#c8c8c8"/><rect x="1" y="20" width="4" height="4" fill="#c8c8c8"/><rect x="6" y="20" width="4" height="4" fill="#c8c8c8"/><rect x="11" y="20" width="4" height="4" fill="#c8c8c8"/></g><circle cx="16.200" cy="8.600" r="9.200" fill="#444"/><circle cx="16.200" cy="8.600" r="8.300" fill="#e09850"/><path d="M13.600 .7c-.8 5-.8 11 0 15.800M18.800 .7c.8 5 .8 11 0 15.800M8.300 6c5-.8 11-.8 15.800 0M8.300 11.200c5 .8 11 .8 15.800 0" stroke="#3c3c3c" stroke-width="1.100" fill="none"/></svg>
<svg style="left:1085px;top:119px" width="30" height="29" viewBox="0 0 30 29" ><path d="M2.500 10v14M5 7.300l11-4" stroke="#e09850" stroke-width="1.100" fill="none"/><g shape-rendering="crispEdges"><rect x="0" y="6" width="5" height="5" fill="#3c3c3c"/><rect x="1" y="7" width="3" height="3" fill="#e09850"/><rect x="2" y="8" width="1" height="1" fill="#3c3c3c"/><rect x="16" y="0" width="5" height="5" fill="#3c3c3c"/><rect x="17" y="1" width="3" height="3" fill="#e09850"/><rect x="18" y="2" width="1" height="1" fill="#3c3c3c"/><rect x="0" y="23" width="5" height="5" fill="#3c3c3c"/><rect x="1" y="24" width="3" height="3" fill="#e09850"/><rect x="2" y="25" width="1" height="1" fill="#3c3c3c"/></g><path d="M27.300 4.300L17.800 13" stroke="#3c3c3c" stroke-width="5.400" stroke-linecap="round"/><path d="M27.300 4.300L17.800 13" stroke="#c8c8c8" stroke-width="3.900" stroke-linecap="round"/><path d="M15.200 13.300l3.500 3.800-2.500 2.200-1-.3-.5 1.200-1.300-.2-.6 1.200-1.400-.2-.7 1.200-1.500-.1-.8 1.100-1.600.1L3 25.800z" fill="#c8c8c8" stroke="#3c3c3c" stroke-width="0.700"/></svg>
<svg style="left:1121px;top:119px" width="25" height="28" viewBox="0 0 25 28" ><g shape-rendering="crispEdges"><rect x="2" y="6" width="1" height="15" fill="#c8c8c8"/><rect x="22" y="6" width="1" height="15" fill="#c8c8c8"/><rect x="5" y="3" width="4" height="1" fill="#c8c8c8"/><rect x="16" y="3" width="4" height="1" fill="#c8c8c8"/><rect x="5" y="23" width="4" height="1" fill="#c8c8c8"/><rect x="16" y="23" width="4" height="1" fill="#c8c8c8"/><rect x="12" y="6" width="1" height="15" fill="#e09850"/><rect x="0" y="1" width="5" height="5" fill="#3c3c3c"/><rect x="1" y="2" width="3" height="3" fill="#c8c8c8"/><rect x="2" y="3" width="1" height="1" fill="#3c3c3c"/><rect x="20" y="1" width="5" height="5" fill="#3c3c3c"/><rect x="21" y="2" width="3" height="3" fill="#c8c8c8"/><rect x="22" y="3" width="1" height="1" fill="#3c3c3c"/><rect x="0" y="21" width="5" height="5" fill="#3c3c3c"/><rect x="1" y="22" width="3" height="3" fill="#c8c8c8"/><rect x="2" y="23" width="1" height="1" fill="#3c3c3c"/><rect x="20" y="21" width="5" height="5" fill="#3c3c3c"/><rect x="21" y="22" width="3" height="3" fill="#c8c8c8"/><rect x="22" y="23" width="1" height="1" fill="#3c3c3c"/><rect x="9" y="0" width="7" height="7" fill="#3c3c3c"/><rect x="10" y="1" width="5" height="5" fill="#e09850"/><rect x="11" y="2" width="3" height="3" fill="#3c3c3c"/><rect x="9" y="20" width="7" height="7" fill="#3c3c3c"/><rect x="10" y="21" width="5" height="5" fill="#e09850"/><rect x="11" y="22" width="3" height="3" fill="#3c3c3c"/></g></svg>
<svg style="left:1155px;top:121px" width="30" height="24" viewBox="0 0 30 24" ><g shape-rendering="crispEdges"><rect x="5" y="2" width="3" height="1" fill="#c8c8c8"/><rect x="5" y="11" width="3" height="1" fill="#c8c8c8"/><rect x="2" y="5" width="1" height="3" fill="#c8c8c8"/><rect x="10" y="5" width="1" height="3" fill="#c8c8c8"/><rect x="0" y="0" width="5" height="5" fill="#3c3c3c"/><rect x="1" y="1" width="3" height="3" fill="#c8c8c8"/><rect x="8" y="0" width="5" height="5" fill="#3c3c3c"/><rect x="9" y="1" width="3" height="3" fill="#c8c8c8"/><rect x="0" y="9" width="5" height="5" fill="#3c3c3c"/><rect x="1" y="10" width="3" height="3" fill="#c8c8c8"/><rect x="8" y="9" width="5" height="5" fill="#3c3c3c"/><rect x="9" y="10" width="3" height="3" fill="#c8c8c8"/><rect x="1" y="19" width="3" height="3" fill="#e09850"/></g><path d="M9 21.300l1.500-2 1 1z" fill="#e09850"/><path d="M25.500 5.200L14.500 16.300" stroke="#3c3c3c" stroke-width="5.600" stroke-linecap="round"/><path d="M25.500 5.200L14.500 16.300" stroke="#c8c8c8" stroke-width="4" stroke-linecap="round"/><path d="M21.600 4.200l4 4" stroke="#3c3c3c" stroke-width="0.900"/><path d="M12.300 14.700l3.800 3.800-5.800 2.500z" fill="#c8c8c8" stroke="#3c3c3c" stroke-width="0.700"/><path d="M10.300 21l1.300-.6-.7-.7z" fill="#3c3c3c"/></svg>
<svg style="left:1204px;top:121px" width="27" height="25" viewBox="0 0 27 25" ><rect x="1" y="1" width="22" height="22" fill="#5fb08c"/><g shape-rendering="crispEdges"><rect x="15" y="14" width="11" height="11" fill="#383838"/><rect x="16" y="15" width="3" height="3" fill="#dcdcdc"/><rect x="19" y="15" width="3" height="3" fill="#404040"/><rect x="22" y="15" width="3" height="3" fill="#dcdcdc"/><rect x="16" y="18" width="3" height="3" fill="#404040"/><rect x="19" y="18" width="3" height="3" fill="#dcdcdc"/><rect x="22" y="18" width="3" height="3" fill="#404040"/><rect x="16" y="21" width="3" height="3" fill="#dcdcdc"/><rect x="19" y="21" width="3" height="3" fill="#404040"/><rect x="22" y="21" width="3" height="3" fill="#dcdcdc"/></g></svg>
<svg style="left:1239px;top:121px" width="28" height="25" viewBox="0 0 28 25" ><path d="M.750 .5C6 7.500 18 7.500 23.250 .5V18.300C18 25 6 25 .750 18.300z" fill="#5fb08c"/><g shape-rendering="crispEdges"><rect x="16" y="14" width="11" height="11" fill="#383838"/><rect x="17" y="15" width="3" height="3" fill="#dcdcdc"/><rect x="20" y="15" width="3" height="3" fill="#404040"/><rect x="23" y="15" width="3" height="3" fill="#dcdcdc"/><rect x="17" y="18" width="3" height="3" fill="#404040"/><rect x="20" y="18" width="3" height="3" fill="#dcdcdc"/><rect x="23" y="18" width="3" height="3" fill="#404040"/><rect x="17" y="21" width="3" height="3" fill="#dcdcdc"/><rect x="20" y="21" width="3" height="3" fill="#404040"/><rect x="23" y="21" width="3" height="3" fill="#dcdcdc"/></g></svg>
<svg style="left:1274px;top:121px" width="28" height="25" viewBox="0 0 28 25" ><path d="M2.300 2.200C8 7.500 17 7.500 22.300 2.200C25.500 8 25.500 16 21 20.500C17 24 8 24 4 20.500C-1 16-1 8 2.300 2.200z" fill="#5fb08c"/><g shape-rendering="crispEdges"><rect x="17" y="14" width="11" height="11" fill="#383838"/><rect x="18" y="15" width="3" height="3" fill="#dcdcdc"/><rect x="21" y="15" width="3" height="3" fill="#404040"/><rect x="24" y="15" width="3" height="3" fill="#dcdcdc"/><rect x="18" y="18" width="3" height="3" fill="#404040"/><rect x="21" y="18" width="3" height="3" fill="#dcdcdc"/><rect x="24" y="18" width="3" height="3" fill="#404040"/><rect x="18" y="21" width="3" height="3" fill="#dcdcdc"/><rect x="21" y="21" width="3" height="3" fill="#404040"/><rect x="24" y="21" width="3" height="3" fill="#dcdcdc"/></g></svg>
<svg style="left:1309px;top:119px" width="28" height="28" viewBox="0 0 28 28" ><path d="M12 .5l11.500 6.500v13L12 26.500.5 20V7z" fill="#5fb08c"/><path d="M.5 7L12 13.500 23.500 7M12 13.500v13" stroke="#444" stroke-width="2.300" fill="none"/><g shape-rendering="crispEdges"><rect x="17" y="16" width="11" height="11" fill="#383838"/><rect x="18" y="17" width="3" height="3" fill="#dcdcdc"/><rect x="21" y="17" width="3" height="3" fill="#404040"/><rect x="24" y="17" width="3" height="3" fill="#dcdcdc"/><rect x="18" y="20" width="3" height="3" fill="#404040"/><rect x="21" y="20" width="3" height="3" fill="#dcdcdc"/><rect x="24" y="20" width="3" height="3" fill="#404040"/><rect x="18" y="23" width="3" height="3" fill="#dcdcdc"/><rect x="21" y="23" width="3" height="3" fill="#404040"/><rect x="24" y="23" width="3" height="3" fill="#dcdcdc"/></g></svg>
<svg style="left:1344px;top:120px" width="28" height="26" viewBox="0 0 28 26" ><path d="M5.500 23.500C1 18 2.500 13 9.500 11.800S18.500 8.500 18.500 2" fill="none" stroke="#5fb08c" stroke-width="6.400"/><path d="M5.500 23.500C1 18 2.500 13 9.500 11.800S18.500 8.500 18.500 2" fill="none" stroke="#444" stroke-width="1"/><g shape-rendering="crispEdges"><rect x="16" y="15" width="11" height="11" fill="#383838"/><rect x="17" y="16" width="3" height="3" fill="#dcdcdc"/><rect x="20" y="16" width="3" height="3" fill="#404040"/><rect x="23" y="16" width="3" height="3" fill="#dcdcdc"/><rect x="17" y="19" width="3" height="3" fill="#404040"/><rect x="20" y="19" width="3" height="3" fill="#dcdcdc"/><rect x="23" y="19" width="3" height="3" fill="#404040"/><rect x="17" y="22" width="3" height="3" fill="#dcdcdc"/><rect x="20" y="22" width="3" height="3" fill="#404040"/><rect x="23" y="22" width="3" height="3" fill="#dcdcdc"/></g></svg>
<svg style="left:1378px;top:120px" width="26" height="26" viewBox="0 0 26 26" ><g shape-rendering="crispEdges"><rect x="0" y="0" width="26" height="26" fill="#3c3c3c"/><rect x="1" y="1" width="24" height="4" fill="#c8c8c8"/><rect x="2" y="2" width="2" height="2" fill="#333"/><rect x="5" y="2" width="2" height="2" fill="#333"/><rect x="8" y="2" width="2" height="2" fill="#333"/><rect x="1" y="6" width="24" height="19" fill="#5fb08c"/><rect x="6" y="8" width="14" height="14" fill="#383838"/><rect x="7" y="9" width="4" height="4" fill="#dcdcdc"/><rect x="11" y="9" width="4" height="4" fill="#404040"/><rect x="15" y="9" width="4" height="4" fill="#dcdcdc"/><rect x="7" y="13" width="4" height="4" fill="#404040"/><rect x="11" y="13" width="4" height="4" fill="#dcdcdc"/><rect x="15" y="13" width="4" height="4" fill="#404040"/><rect x="7" y="17" width="4" height="4" fill="#dcdcdc"/><rect x="11" y="17" width="4" height="4" fill="#404040"/><rect x="15" y="17" width="4" height="4" fill="#dcdcdc"/></g></svg>
<svg style="left:1411px;top:123px" width="30" height="22" viewBox="0 0 30 22" ><path d="M14.500 11.700L3.500 17.800M14.500 11.700L25.700 17.800M10 9.300L3.500 5.900M19.200 9.300L25.700 5.900" fill="none" stroke="#5fb08c" stroke-width="2.700"/><path d="M.6 19.500l6.300.6-3.400-5.800zM28.600 19.500l-6.300.6 3.400-5.800zM.6 4.300l6.300-.6-3.400 5.800zM28.600 4.300l-6.300-.6 3.400 5.800z" fill="#5fb08c"/><g shape-rendering="crispEdges"><rect x="9" y="0" width="11" height="11" fill="#383838"/><rect x="10" y="1" width="3" height="3" fill="#dcdcdc"/><rect x="13" y="1" width="3" height="3" fill="#404040"/><rect x="16" y="1" width="3" height="3" fill="#dcdcdc"/><rect x="10" y="4" width="3" height="3" fill="#404040"/><rect x="13" y="4" width="3" height="3" fill="#dcdcdc"/><rect x="16" y="4" width="3" height="3" fill="#404040"/><rect x="10" y="7" width="3" height="3" fill="#dcdcdc"/><rect x="13" y="7" width="3" height="3" fill="#404040"/><rect x="16" y="7" width="3" height="3" fill="#dcdcdc"/></g></svg>
<svg style="left:1447px;top:120px" width="28" height="27" viewBox="0 0 28 27" ><path d="M4 3.500C10 0 22 1.500 24.500 6M3.500 5C1.500 11 1.800 18 4.500 22.500S9 26 10 24.500" fill="none" stroke="#5fb08c" stroke-width="1"/><path d="M3.800 4.500L22.500 23" stroke="#3c3c3c" stroke-width="3.600" stroke-linecap="round"/><path d="M2.500 2.200l2.800.3L23.800 24z" fill="#c8c8c8"/><path d="M3.800 4.500L14 14.500" stroke="#c8c8c8" stroke-width="2.600" stroke-linecap="round"/><circle cx="3.300" cy="3.300" r="2.300" fill="none" stroke="#c8c8c8" stroke-width="1.400"/><path d="M24.800 2.800L15.500 12.300" stroke="#3c3c3c" stroke-width="5.400" stroke-linecap="round"/><path d="M24.800 2.800L15.500 12.300" stroke="#c8c8c8" stroke-width="3.800" stroke-linecap="round"/><path d="M13.300 11.600l3.400 3.600-2.400 2-1-.2-.5 1.100-1.200-.1-.6 1.100-1.300-.1-.7 1.100-1.400 0-.8 1.100-1.500 0L1.500 24z" fill="#c8c8c8" stroke="#3c3c3c" stroke-width="0.700"/></svg>
<div class="a" style="left:292px;top:116px;width:2px;height:35px;background:#9a9a9a"></div>
<div class="a" style="left:339px;top:116px;width:2px;height:35px;background:#9a9a9a"></div>
<div class="a" style="left:456px;top:116px;width:2px;height:35px;background:#9a9a9a"></div>
<div class="a" style="left:573px;top:116px;width:2px;height:35px;background:#9a9a9a"></div>
<div class="a" style="left:1075px;top:116px;width:2px;height:35px;background:#9a9a9a"></div>
<div class="a" style="left:1192px;top:116px;width:2px;height:35px;background:#9a9a9a"></div>
<div class="a" style="left:1900px;top:116px;width:12px;height:35px;background:#3a3a3a"></div>
<svg style="left:1900px;top:116px" width="12" height="35" viewBox="0 0 12 35" ><path d="M1 8l5-5 5 5z" fill="#b0b0b0"/><circle cx="6" cy="17.500" r="5" fill="#5d5d5d"/><path d="M1 26l5 5 5-5z" fill="#b0b0b0"/></svg>
<!-- 05_panel.gen.py -->
<span class="t" style="left:58px;top:168px;font-size:12px;color:#dcdcdc;">视图</span>
<span class="t" style="left:97px;top:168px;font-size:12px;color:#dcdcdc;">着色</span>
<span class="t" style="left:136px;top:168px;font-size:12px;color:#dcdcdc;">照明</span>
<span class="t" style="left:175px;top:168px;font-size:12px;color:#dcdcdc;">显示</span>
<span class="t" style="left:214px;top:168px;font-size:12px;color:#dcdcdc;">渲染器</span>
<span class="t" style="left:265px;top:168px;font-size:12px;color:#dcdcdc;">面板</span>
<div class="a" style="left:54px;top:189px;width:1px;height:16px;background:#7e7e7e"></div><div class="a" style="left:53px;top:193px;width:3px;height:8px;background:#7e7e7e"></div>
<div class="hl" style="left:205px;top:188px;width:18px;height:18px"></div>
<div class="box" style="left:262px;top:188px;width:18px;height:18px;background:#505050;border:1px solid #3b3b3b"></div>
<div class="hl" style="left:368px;top:188px;width:18px;height:18px"></div>
<div class="box" style="left:550px;top:188px;width:18px;height:18px;background:#3b3b3b;border:1px solid #363636"></div>
<div class="a" style="left:610px;top:188px;width:18px;height:18px;background:#3d3d3d"></div>
<div class="a" style="left:629px;top:188px;width:18px;height:18px;background:#3d3d3d"></div>
<div class="field" style="left:699px;top:189px;width:38px;height:14px;border-radius:2px;background:#2b2b2b"></div>
<span class="t" style="left:704px;top:189px;font-size:12px;color:#e8e8e8;letter-spacing:0.4px">0.00</span>
<div class="field" style="left:760px;top:189px;width:38px;height:14px;border-radius:2px;background:#2b2b2b"></div>
<span class="t" style="left:766px;top:189px;font-size:12px;color:#e8e8e8;letter-spacing:0.4px">1.00</span>
<div class="hl" style="left:801px;top:188px;width:18px;height:18px"></div>
<div class="dd" style="left:822px;top:188px;width:177px;height:17px"></div>
<div class="a" style="left:978px;top:188px;width:1px;height:17px;background:#555"></div>
<span class="t" style="left:825px;top:190px;font-size:12px;color:#e0e0e0;letter-spacing:0.45px">sRGB gamma</span>
<svg style="left:984px;top:194px" width="9" height="6" viewBox="0 0 9 6" ><path d="M0 0h9L4.500 5z" fill="#d0d0d0"/></svg>
<svg style="left:62px;top:190px" width="16" height="14" viewBox="0 0 16 14" ><rect x="0.900" y="3.800" width="9.200" height="6.500" rx="0.600" fill="#c8c8c8"/><path d="M10.900 7l4.300-3.800v7.600z" fill="#c8c8c8"/></svg>
<svg style="left:81px;top:190px" width="16" height="14" viewBox="0 0 16 14" ><rect x="1.100" y="1.900" width="9.200" height="5.900" rx="0.600" fill="#c8c8c8"/><path d="M11.100 4.900l4.100-3.600v7.400z" fill="#c8c8c8"/><rect x="0.300" y="7" width="7.800" height="6.500" fill="#444"/><path d="M2.600 8V6.800a1.700 1.700 0 0 1 3.400 0V8" fill="none" stroke="#4fb9c8" stroke-width="1.300"/><rect x="1.100" y="7.800" width="6.300" height="5" fill="#4fb9c8"/><rect x="3.800" y="9.500" width="1" height="1.800" fill="#444"/></svg>
<svg style="left:100px;top:190px" width="16" height="14" viewBox="0 0 16 14" ><rect x="1.100" y="1.900" width="9.200" height="5.900" rx="0.600" fill="#c8c8c8"/><path d="M11.100 4.900l4.100-3.600v7.400z" fill="#c8c8c8"/><circle cx="5" cy="9" r="4.900" fill="#444"/><circle cx="5" cy="9" r="2.300" fill="none" stroke="#4fb9c8" stroke-width="1.500"/><circle cx="5" cy="9" r="3.600" fill="none" stroke="#4fb9c8" stroke-width="1.300" stroke-dasharray="1.400 1.430"/></svg>
<svg style="left:123px;top:190px" width="8" height="13" viewBox="0 0 8 13" ><path d="M.8 1.100h6.200v10.800L3.900 9.400.8 11.900z" fill="#c8c8c8"/></svg>
<svg style="left:139px;top:190px" width="15" height="14" viewBox="0 0 15 14" ><path d="M.2 13.800L4.500 9h9.500l-3.600 4.800z" fill="#c8c8c8"/><path d="M3 11.200h9.500M6 9l-3.500 4.800" stroke="#444" stroke-width="0.800"/><path d="M5.200 12.300V6.500l5-5v8z" fill="#4fb9c8" stroke="#444" stroke-width="0.500"/></svg>
<svg style="left:158px;top:189px" width="15" height="16" viewBox="0 0 15 16" ><path d="M6.200 2.500v7.500M1.500 7.500h8" stroke="#c8c8c8" stroke-width="1.300"/><path d="M6.200 1l2.300 3h-4.600zM-.1 7.500l3-2.300v4.600z" fill="#c8c8c8"/><circle cx="10.750" cy="10" r="3.500" fill="#444"/><circle cx="10.750" cy="10" r="2.800" fill="none" stroke="#4fb9c8" stroke-width="1.500"/><path d="M8.700 12.100L5.500 14.800" stroke="#4fb9c8" stroke-width="1.900"/></svg>
<svg style="left:177px;top:190px" width="15" height="15" viewBox="0 0 15 15" ><path d="M11.800 2.700l-6.300 6" stroke="#c8c8c8" stroke-width="3.700" stroke-linecap="round"/><path d="M3.500 7.700l3 3-2.700 2.500-2.800-.3z" fill="#4fb9c8"/><path d="M7.500 11c0 2.500 3.800 3 4-.3" fill="none" stroke="#c8c8c8" stroke-width="1.100"/></svg>
<svg style="left:205px;top:188px" width="18" height="18" viewBox="0 0 18 18" ><rect x="2.300" y="2.300" width="13.400" height="13.400" fill="#3a4a55"/><rect x="3" y="3" width="12" height="12" fill="#dedede"/><rect x="4.6" y="4.6" width="2.400" height="2.400" fill="#2e2e2e"/><rect x="8.1" y="4.6" width="2.400" height="2.400" fill="#2e2e2e"/><rect x="11.6" y="4.6" width="2.400" height="2.400" fill="#2e2e2e"/><rect x="4.6" y="8.1" width="2.400" height="2.400" fill="#2e2e2e"/><rect x="8.1" y="8.1" width="2.400" height="2.400" fill="#2e2e2e"/><rect x="11.6" y="8.1" width="2.400" height="2.400" fill="#2e2e2e"/><rect x="4.6" y="11.6" width="2.400" height="2.400" fill="#2e2e2e"/><rect x="8.1" y="11.6" width="2.400" height="2.400" fill="#2e2e2e"/><rect x="11.6" y="11.6" width="2.400" height="2.400" fill="#2e2e2e"/></svg>
<svg style="left:225px;top:189px" width="16" height="16" viewBox="0 0 16 16" ><g shape-rendering="crispEdges"><rect x="0" y="1" width="16" height="14" fill="#3c3c3c"/><rect x="1" y="2" width="14" height="12" fill="#e0e0e0"/><rect x="2" y="3" width="12" height="10" fill="#3a3a3a"/></g><g shape-rendering="crispEdges"><rect x="2" y="4" width="12" height="1" fill="#e0e0e0"/><rect x="2" y="11" width="12" height="1" fill="#e0e0e0"/><rect x="3" y="3" width="2" height="1" fill="#e0e0e0"/><rect x="3" y="12" width="2" height="1" fill="#e0e0e0"/><rect x="6" y="3" width="2" height="1" fill="#e0e0e0"/><rect x="6" y="12" width="2" height="1" fill="#e0e0e0"/><rect x="9" y="3" width="2" height="1" fill="#e0e0e0"/><rect x="9" y="12" width="2" height="1" fill="#e0e0e0"/><rect x="12" y="3" width="2" height="1" fill="#e0e0e0"/><rect x="12" y="12" width="2" height="1" fill="#e0e0e0"/></g></svg>
<svg style="left:244px;top:189px" width="16" height="16" viewBox="0 0 16 16" ><g shape-rendering="crispEdges"><rect x="0" y="1" width="16" height="14" fill="#3c3c3c"/><rect x="1" y="2" width="14" height="12" fill="#e0e0e0"/><rect x="2" y="3" width="12" height="10" fill="#3a3a3a"/></g><circle cx="8" cy="8" r="3.200" fill="#4fb9c8"/></svg>
<svg style="left:263px;top:189px" width="16" height="16" viewBox="0 0 16 16" ><circle cx="8" cy="8" r="4" fill="#414141"/></svg>
<svg style="left:282px;top:189px" width="16" height="16" viewBox="0 0 16 16" ><g shape-rendering="crispEdges"><rect x="0" y="1" width="16" height="14" fill="#3c3c3c"/><rect x="1" y="2" width="14" height="12" fill="#e0e0e0"/><rect x="2" y="3" width="12" height="10" fill="#3a3a3a"/></g><path d="M1.500 8h13" stroke="#4fb9c8" stroke-width="2" stroke-dasharray="1 0.800"/><path d="M8 3v10" stroke="#4fb9c8" stroke-width="2" stroke-dasharray="1 1.200"/></svg>
<svg style="left:301px;top:189px" width="16" height="16" viewBox="0 0 16 16" ><g shape-rendering="crispEdges"><rect x="0" y="1" width="16" height="14" fill="#3c3c3c"/><rect x="1" y="2" width="14" height="12" fill="#e0e0e0"/><rect x="2" y="3" width="12" height="10" fill="#3a3a3a"/></g><path d="M3.500 12l3.200-4.500 3.200 4.500z" fill="#4fb9c8"/><circle cx="10.800" cy="6" r="2.400" fill="#4fb9c8"/></svg>
<svg style="left:320px;top:189px" width="16" height="16" viewBox="0 0 16 16" ><g shape-rendering="crispEdges"><rect x="0" y="1" width="16" height="14" fill="#3c3c3c"/><rect x="1" y="2" width="14" height="12" fill="#e0e0e0"/><rect x="2" y="3" width="12" height="10" fill="#3a3a3a"/></g><text x="8" y="12.200" font-family="Liberation Serif,serif" font-weight="bold" font-size="12" text-anchor="middle" fill="#4fb9c8">T</text></svg>
<svg style="left:351px;top:189px" width="15" height="16" viewBox="0 0 15 16" ><path d="M7.500 .5l6.500 3v8.500l-6.500 3.500L1 12V3.500z" fill="none" stroke="#c8c8c8" stroke-width="1"/><path d="M1 3.500l6.500 3.500 6.500-3.500M7.500 7v8.500" fill="none" stroke="#c8c8c8" stroke-width="1"/><path d="M1 12l6.500-3.500L14 12M7.500 .5v8" fill="none" stroke="#c8c8c8" stroke-width="0.600" stroke-dasharray="1.500 1"/></svg>
<svg style="left:370px;top:189px" width="15" height="16" viewBox="0 0 15 16" ><path d="M7.500 .5l6.500 3v8.500l-6.500 3.500L1 12V3.500z" fill="#4fb9c8" stroke="#2f4f5c" stroke-width="1"/><path d="M1 3.500l6.500 3.500 6.500-3.500M7.500 7v8.500" fill="none" stroke="#2f4f5c" stroke-width="1"/><path d="M7.500 .5l6.500 3-6.500 3.500L1 3.500z" fill="#7fd8e4" stroke="#2f4f5c" stroke-width="0.800"/></svg>
<svg style="left:389px;top:190px" width="14" height="14" viewBox="0 0 14 14" ><circle cx="7" cy="7" r="6.500" fill="#c8c8c8"/><path d="M7 .5a6.500 6.500 0 0 1 0 13z" fill="#444"/><g fill="#c8c8c8"><rect x="8" y="2" width="1.600" height="1.600"/><rect x="10.500" y="4" width="1.600" height="1.600"/><rect x="8" y="6" width="1.600" height="1.600"/><rect x="10.500" y="8" width="1.600" height="1.600"/><rect x="8" y="10" width="1.600" height="1.600"/><rect x="12" y="6" width="1.300" height="1.600"/></g></svg>
<svg style="left:408px;top:189px" width="15" height="16" viewBox="0 0 15 16" ><path d="M7.500 .5l6.500 3v8.500l-6.500 3.500L1 12V3.500z" fill="none" stroke="#c8c8c8" stroke-width="1"/><path d="M1 3.500l6.500 3.500 6.500-3.500M7.500 7v8.500" fill="none" stroke="#c8c8c8" stroke-width="1"/><path d="M4 6.500l3 1.500v5l-3-1.700zM11 6.500l-3 1.500v5l3-1.700zM7.500 2l3 1.500-3 1.500-3-1.500z" fill="#4fb9c8"/></svg>
<svg style="left:427px;top:190px" width="14" height="14" viewBox="0 0 14 14" ><clipPath id="cpt"><circle cx="7" cy="7" r="6.500"/></clipPath><circle cx="7" cy="7" r="6.500" fill="#3a3a3a"/><g clip-path="url(#cpt)"><rect x="1.0" y="1.0" width="2" height="2" fill="#c8c8c8"/><rect x="5.0" y="1.0" width="2" height="2" fill="#c8c8c8"/><rect x="9.0" y="1.0" width="2" height="2" fill="#c8c8c8"/><rect x="3.0" y="3.0" width="2" height="2" fill="#c8c8c8"/><rect x="7.0" y="3.0" width="2" height="2" fill="#c8c8c8"/><rect x="11.0" y="3.0" width="2" height="2" fill="#c8c8c8"/><rect x="1.0" y="5.0" width="2" height="2" fill="#c8c8c8"/><rect x="5.0" y="5.0" width="2" height="2" fill="#c8c8c8"/><rect x="9.0" y="5.0" width="2" height="2" fill="#c8c8c8"/><rect x="3.0" y="7.0" width="2" height="2" fill="#c8c8c8"/><rect x="7.0" y="7.0" width="2" height="2" fill="#c8c8c8"/><rect x="11.0" y="7.0" width="2" height="2" fill="#c8c8c8"/><rect x="1.0" y="9.0" width="2" height="2" fill="#c8c8c8"/><rect x="5.0" y="9.0" width="2" height="2" fill="#c8c8c8"/><rect x="9.0" y="9.0" width="2" height="2" fill="#c8c8c8"/><rect x="3.0" y="11.0" width="2" height="2" fill="#c8c8c8"/><rect x="7.0" y="11.0" width="2" height="2" fill="#c8c8c8"/><rect x="11.0" y="11.0" width="2" height="2" fill="#c8c8c8"/></g></svg>
<svg style="left:445px;top:189px" width="16" height="16" viewBox="0 0 16 16" ><path d="M8 3a4 4 0 0 1 2.500 7.200V12h-5v-1.800A4 4 0 0 1 8 3z" fill="#eee"/><rect x="6" y="12.500" width="4" height="2.500" fill="#c8c8c8"/><path d="M8 0v1.500M2.500 2l1 1.200M13.500 2l-1 1.200M.5 6.500H2M14 6.500h1.500" stroke="#eee" stroke-width="1"/></svg>
<svg style="left:465px;top:190px" width="15" height="14" viewBox="0 0 15 14" ><ellipse cx="5" cy="10.500" rx="4" ry="2.200" fill="#c8c8c8" transform="rotate(-30 5 10.500)"/><path d="M2 9l5 3M3 8l5 2.500" stroke="#444" stroke-width="0.600"/><circle cx="10" cy="5.500" r="4.800" fill="#4fb9c8"/></svg>
<svg style="left:495px;top:189px" width="14" height="16" viewBox="0 0 14 16" ><circle cx="7" cy="5.500" r="5.500" fill="#c8c8c8"/><path d="M1 12l4-3h8l-4 3.500z" fill="#4fb9c8" opacity="0.900"/><path d="M0 14l3-1.500 3 1.500 3-1.500 3 1.500" fill="none" stroke="#4fb9c8" stroke-width="1"/><path d="M4 9v3M6.500 9.500v3M9 9v3" stroke="#444" stroke-width="0.700"/></svg>
<svg style="left:513px;top:189px" width="16" height="16" viewBox="0 0 16 16" ><circle cx="4.500" cy="11" r="4" fill="#5a5a5a"/><circle cx="7.500" cy="8" r="4" fill="#7a7a7a"/><circle cx="11" cy="4.500" r="4.200" fill="#c8c8c8"/></svg>
<svg style="left:534px;top:190px" width="13" height="14" viewBox="0 0 13 14" ><path d="M6.500 1A6 6 0 0 0 6.500 13" fill="none" stroke="#4fb9c8" stroke-width="2"/><path d="M6.500 1A6 6 0 0 1 6.500 13" fill="none" stroke="#e8e8e8" stroke-width="2" stroke-dasharray="2 1.500"/></svg>
<svg style="left:551px;top:189px" width="16" height="16" viewBox="0 0 16 16" ><rect x="3" y="3" width="7" height="7" fill="#3c5a60"/><rect x="6" y="6" width="7.500" height="7.500" fill="#456469"/></svg>
<svg style="left:582px;top:189px" width="15" height="16" viewBox="0 0 15 16" ><rect x="1" y="1.500" width="8" height="8" fill="none" stroke="#4fb9c8" stroke-width="1.200" stroke-dasharray="2.500 1.500"/><path d="M7.500 5.500l6.500 6-2.800.300 1.500 3-1.400.700-1.500-3-2.300 1.800z" fill="#c8c8c8" stroke="#444" stroke-width="0.500"/></svg>
<svg style="left:611px;top:189px" width="16" height="16" viewBox="0 0 16 16" ><rect x="5" y="2" width="9" height="9" fill="none" stroke="#c8c8c8" stroke-width="1.600"/><rect x="1.500" y="5.500" width="9" height="9" fill="#444" stroke="#c8c8c8" stroke-width="1.600"/><rect x="5.500" y="5.800" width="4.500" height="4.500" fill="#c8c8c8"/></svg>
<svg style="left:630px;top:189px" width="16" height="16" viewBox="0 0 16 16" ><path d="M6 2.500h8v8h-3" fill="none" stroke="#c8c8c8" stroke-width="1.400"/><rect x="1.500" y="5.500" width="9" height="9" fill="#c8c8c8"/></svg>
<svg style="left:649px;top:189px" width="16" height="16" viewBox="0 0 16 16" ><rect x="1.500" y="1.500" width="13" height="13" fill="#3a3a3a" stroke="#c8c8c8" stroke-width="1.200"/><path d="M4.500 4.500l6 6" stroke="#c8c8c8" stroke-width="1.200"/><circle cx="5" cy="5" r="1.500" fill="#c8c8c8"/><circle cx="10.500" cy="10.500" r="2" fill="#c8c8c8"/></svg>
<svg style="left:682px;top:190px" width="13" height="13" viewBox="0 0 13 13" ><circle cx="6.500" cy="6.500" r="6.300" fill="#e0e0e0"/><path d="M6.500 6.500L4 .8M6.500 6.500l5.500-3M6.500 6.500l6 2M6.500 6.500l1.500 6M6.500 6.500L2 11M6.500 6.500L.3 5" stroke="#444" stroke-width="1.100"/><circle cx="6.500" cy="6.500" r="2" fill="#444"/></svg>
<svg style="left:743px;top:190px" width="12" height="13" viewBox="0 0 12 13" ><rect x="3" y="0.500" width="9" height="12" rx="1" fill="#e0e0e0"/><circle cx="4.500" cy="6.500" r="4.300" fill="#444" stroke="#e0e0e0" stroke-width="0"/><path d="M4.500 2.200a4.300 4.300 0 0 0 0 8.600z" fill="#e0e0e0"/></svg>
<svg style="left:801px;top:188px" width="18" height="18" viewBox="0 0 18 18" ><circle cx="9" cy="9" r="7" fill="#4fb9c8" stroke="#2f4f5c" stroke-width="1"/><text x="9" y="11.300" font-family="Liberation Sans,sans-serif" font-weight="bold" font-size="6" text-anchor="middle" fill="#2f4f5c">ON</text></svg>
<div class="a" style="left:198px;top:189px;width:1px;height:16px;background:#7e7e7e"></div><div class="a" style="left:197px;top:193px;width:3px;height:8px;background:#7e7e7e"></div>
<div class="a" style="left:342px;top:189px;width:1px;height:16px;background:#7e7e7e"></div><div class="a" style="left:341px;top:193px;width:3px;height:8px;background:#7e7e7e"></div>
<div class="a" style="left:486px;top:189px;width:1px;height:16px;background:#7e7e7e"></div><div class="a" style="left:485px;top:193px;width:3px;height:8px;background:#7e7e7e"></div>
<div class="a" style="left:573px;top:189px;width:1px;height:16px;background:#7e7e7e"></div><div class="a" style="left:572px;top:193px;width:3px;height:8px;background:#7e7e7e"></div>
<div class="a" style="left:603px;top:189px;width:1px;height:16px;background:#7e7e7e"></div><div class="a" style="left:602px;top:193px;width:3px;height:8px;background:#7e7e7e"></div>
<div class="a" style="left:671px;top:189px;width:1px;height:16px;background:#7e7e7e"></div><div class="a" style="left:670px;top:193px;width:3px;height:8px;background:#7e7e7e"></div>
<svg style="left:50px;top:821px" width="50" height="50" viewBox="0 0 50 50" ><g shape-rendering="crispEdges"><rect x="25" y="11" width="1" height="14" fill="#00e000"/><rect x="25" y="17" width="1" height="7" fill="#1030ff"/><rect x="26" y="24" width="13" height="1" fill="#ff0000"/></g><text x="22.800" y="7.500" font-family="Liberation Sans,sans-serif" font-size="9.500" font-weight="bold" fill="#00e000">y</text><text x="26.300" y="22" font-family="Liberation Sans,sans-serif" font-size="7" font-weight="bold" fill="#1030ff">z</text><text x="38.500" y="22.800" font-family="Liberation Sans,sans-serif" font-size="9.500" font-weight="bold" fill="#ff0000">x</text><path d="M0 50v-8.500l23-16.500c-4.500 8.500-7 18-6 25z" fill="#b4b4b4"/><path d="M2 46l18-15.500M6 50c2-8 8-16 16-22M12 50c1-7 4-14 9-20" stroke="#d8d8d8" stroke-width="0.700" fill="none"/></svg>
<!-- 06_toolbox.gen.py -->
<div class="hl" style="left:4px;top:173px;width:36px;height:36px"></div>
<svg style="left:16px;top:177px" width="18" height="28" viewBox="0 0 18 28" ><path d="M0.7 0.9V25.1L5.8 19.5L9.1 27.3L13.6 25.1L10.2 18.4L16.9 17.2z" fill="#c8c8c8" stroke="#444" stroke-width="1" stroke-linejoin="round"/></svg>
<svg style="left:7px;top:214px" width="30" height="30" viewBox="0 0 30 30" ><ellipse cx="13.1" cy="11" rx="13.8" ry="6" transform="rotate(-42 13.1 11)" fill="none" stroke="#4fb9c8" stroke-width="2.1" stroke-dasharray="5.2 3"/><g transform="translate(14.3,7.2) scale(0.76)"><path d="M0.7 0.9V25.1L5.8 19.5L9.1 27.3L13.6 25.1L10.2 18.4L16.9 17.2z" fill="#c8c8c8" stroke="#444" stroke-width="1" stroke-linejoin="round"/></g></svg>
<svg style="left:7px;top:251px" width="30" height="30" viewBox="0 0 30 30" ><ellipse cx="12" cy="17.1" rx="13.8" ry="6.2" transform="rotate(47 12 17.1)" fill="none" stroke="#4fb9c8" stroke-width="2.1" stroke-dasharray="5.2 3"/><path d="M28 1.3l-8 8.5" stroke="#c8c8c8" stroke-width="3.4" stroke-linecap="round"/><path d="M18.3 8.8l3.700 3.700c-2.500 4.500-8 6-14.500 4.300 5-1 8.500-3.500 10.800-8z" fill="#c8c8c8" stroke="#444" stroke-width="0.8"/></svg>
<svg style="left:8px;top:287px" width="29" height="29" viewBox="0 0 29 29" ><rect x="8.2" y="8.7" width="12" height="12" fill="#c8c8c8"/><path d="M14.2 1l3.600 4h-7.200zM14.2 28.5l3.600-4h-7.200zM0 14.700l4.200-3.700v7.400zM28.500 14.700l-4.200-3.700v7.400z" fill="#4fb9c8"/></svg>
<svg style="left:7px;top:324px" width="31" height="31" viewBox="0 0 31 31" ><path d="M13.500 28.800A13.800 13.800 0 1 1 28.300 14.500" fill="none" stroke="#4fb9c8" stroke-width="1.400"/><path d="M25.300 14l6 0-3 4.500z" fill="#4fb9c8"/><path d="M14.300 6.800l8.200 8-8.200 8-8.200-8z" fill="#c8c8c8"/></svg>
<svg style="left:9px;top:362px" width="28" height="28" viewBox="0 0 28 28" ><rect x="2" y="1.500" width="24" height="24" fill="none" stroke="#4fb9c8" stroke-width="1" stroke-dasharray="3 2"/><path d="M10.500 11.500h4.500v4.500" fill="none" stroke="#4fb9c8" stroke-width="1"/><rect x="1" y="15.300" width="11" height="10.800" fill="#c8c8c8" stroke="#444" stroke-width="0.600"/></svg>
<div class="a" style="left:4px;top:473px;width:36px;height:2px;background:#7e7e7e"></div>
<svg style="left:8px;top:484px" width="28" height="28" viewBox="0 0 28 28" ><rect x="0.500" y="0.500" width="27" height="27" fill="#c8c8c8"/><rect x="2.500" y="2.500" width="23" height="23" fill="none" stroke="#444" stroke-width="0.800"/><path d="M14 8.05l3.5 2.4499999999999997-3.5 2.4499999999999997-3.5-2.4499999999999997z" fill="#444"/><path d="M14 15.55l3.5 2.4499999999999997-3.5 2.4499999999999997-3.5-2.4499999999999997z" fill="#444"/><path d="M9 11.75l3.5 2.4499999999999997-3.5 2.4499999999999997-3.5-2.4499999999999997z" fill="#444"/><path d="M19 11.75l3.5 2.4499999999999997-3.5 2.4499999999999997-3.5-2.4499999999999997z" fill="#444"/></svg>
<svg style="left:8px;top:521px" width="28" height="28" viewBox="0 0 28 28" ><rect x="0.500" y="0.500" width="12" height="12" fill="none" stroke="#c8c8c8" stroke-width="1"/><rect x="15" y="0" width="13" height="13" fill="#c8c8c8"/><rect x="0.500" y="15.500" width="12" height="12" fill="none" stroke="#c8c8c8" stroke-width="1"/><rect x="15.500" y="15.500" width="12" height="12" fill="none" stroke="#c8c8c8" stroke-width="1"/><path d="M6.5 3.5v6M3.5 6.5h6" stroke="#c8c8c8" stroke-width="1"/><path d="M6.5 18.5v6M3.5 21.5h6" stroke="#c8c8c8" stroke-width="1"/><path d="M21.5 18.5v6M18.5 21.5h6" stroke="#c8c8c8" stroke-width="1"/><path d="M21.5 4.050000000000001l3.5 2.4499999999999997-3.5 2.4499999999999997-3.5-2.4499999999999997z" fill="#444"/></svg>
<svg style="left:8px;top:558px" width="28" height="28" viewBox="0 0 28 28" ><rect x="0.500" y="0.500" width="12" height="27" fill="none" stroke="#c8c8c8" stroke-width="1"/><rect x="15" y="0" width="13" height="28" fill="#c8c8c8"/><path d="M6.5 11v6M3.5 14h6" stroke="#c8c8c8" stroke-width="1"/><path d="M21.5 11.55l3.5 2.4499999999999997-3.5 2.4499999999999997-3.5-2.4499999999999997z" fill="#444"/></svg>
<svg style="left:8px;top:595px" width="28" height="28" viewBox="0 0 28 28" ><rect x="0.500" y="0.500" width="27" height="27" fill="none" stroke="#c8c8c8" stroke-width="1"/><rect x="4.500" y="4" width="3" height="3" fill="#c8c8c8"/><path d="M8 5.500h11M6 7v17.500M6 10.500h5M6 16.500h5M6 22.500h5M14 10.500h9M14 16.500h6M14 22.500h8" stroke="#c8c8c8" stroke-width="1" fill="none"/><g fill="#c8c8c8"><rect x="10.500" y="9" width="3" height="3"/><rect x="10.500" y="15" width="3" height="3"/><rect x="10.500" y="21" width="3" height="3"/></g></svg>
<svg style="left:5px;top:838px" width="34" height="31" viewBox="0 0 34 31" ><defs><linearGradient id="ml1" x1="0" y1="0" x2="0" y2="1"><stop offset="0" stop-color="#a6e0e2"/><stop offset="1" stop-color="#2d9ea6"/></linearGradient><linearGradient id="ml2" x1="0" y1="0" x2="0" y2="1"><stop offset="0" stop-color="#36b6bd"/><stop offset="1" stop-color="#0f8b94"/></linearGradient></defs>
<path d="M1 1l8 12v16.500l-8 .300z" fill="#1d9aa2"/>
<path d="M25 1.500h8.200v28.300l-8.200-.300z" fill="#12a3ab"/>
<path d="M33.200 1.500v28.300l-5-.200 3-20z" fill="#0e858e"/>
<path d="M25 1.500h8.200L20.500 24.200h-5.500z" fill="url(#ml2)"/>
<path d="M1 0.300h8.800l10.700 23.900h-5.500z" fill="url(#ml1)"/>
<path d="M1 29.800l5-12 3 .500v11.200z" fill="#15848c" opacity="0.700"/></svg>
<!-- 07_right.gen.py -->
<div class="box" style="left:1904px;top:163px;width:18px;height:111px;background:#3e3e3e;border:1px solid #353535;border-radius:3px 0 0 3px"></div>
<div class="a" style="left:1905px;top:163px;width:16px;height:111px"><div style="position:absolute;left:50%;top:50%;width:111px;height:16px;line-height:16px;margin-left:-55.5px;margin-top:-8px;transform:rotate(-90deg);text-align:center;white-space:nowrap;font-size:12px;color:#a2a2a2;letter-spacing:0px">通道盒<span style="padding:0 1px">/</span>层编辑器</div></div>
<div class="box" style="left:1904px;top:275px;width:18px;height:83px;background:#3e3e3e;border:1px solid #353535;border-radius:3px 0 0 3px"></div>
<div class="a" style="left:1905px;top:275px;width:16px;height:83px"><div style="position:absolute;left:50%;top:50%;width:83px;height:16px;line-height:16px;margin-left:-41.5px;margin-top:-8px;transform:rotate(-90deg);text-align:center;white-space:nowrap;font-size:12px;color:#a2a2a2;letter-spacing:0px">建模工具包</div></div>
<div class="box" style="left:1904px;top:359px;width:18px;height:77px;background:#3e3e3e;border:1px solid #353535;border-radius:3px 0 0 3px"></div>
<div class="a" style="left:1905px;top:359px;width:16px;height:77px"><div style="position:absolute;left:50%;top:50%;width:77px;height:16px;line-height:16px;margin-left:-38.5px;margin-top:-8px;transform:rotate(-90deg);text-align:center;white-space:nowrap;font-size:12px;color:#a2a2a2;letter-spacing:0px">属性编辑器</div></div>
<div class="box" style="left:1904px;top:443px;width:18px;height:110px;background:#3e3e3e;border:1px solid #353535;border-radius:3px 0 0 3px"></div>
<div class="a" style="left:1905px;top:443px;width:16px;height:110px"><div style="position:absolute;left:50%;top:50%;width:110px;height:16px;line-height:16px;margin-left:-55.0px;margin-top:-8px;transform:rotate(-90deg);text-align:center;white-space:nowrap;font-size:12px;color:#a2a2a2;letter-spacing:0.45px">TeamonesTools</div></div>
<div class="box" style="left:1851px;top:437px;width:70px;height:111px;border:2px solid #e8202a;"></div>
<!-- 08_bottom.gen.py -->
<div class="a" style="left:13px;top:881px;width:1612px;height:56px;background:#2b2b2b;overflow:hidden" id="timeline">
<div class="a" style="left:22px;top:0;width:11px;height:56px;background:#555555"></div>
<div class="a" style="left:7px;top:17px;width:2px;height:39px;background:#8c8c8c"></div>
<span class="t" style="left:10px;top:-1px;color:#8f8f8f;font-size:12px">0</span>
<div class="a" style="left:73px;top:17px;width:2px;height:39px;background:#8c8c8c"></div>
<span class="t" style="left:76px;top:-1px;color:#8f8f8f;font-size:12px">5</span>
<div class="a" style="left:139px;top:17px;width:2px;height:39px;background:#8c8c8c"></div>
<span class="t" style="left:142px;top:-1px;color:#8f8f8f;font-size:12px">10</span>
<div class="a" style="left:205px;top:17px;width:2px;height:39px;background:#8c8c8c"></div>
<span class="t" style="left:208px;top:-1px;color:#8f8f8f;font-size:12px">15</span>
<div class="a" style="left:271px;top:17px;width:2px;height:39px;background:#8c8c8c"></div>
<span class="t" style="left:274px;top:-1px;color:#8f8f8f;font-size:12px">20</span>
<div class="a" style="left:337px;top:17px;width:2px;height:39px;background:#8c8c8c"></div>
<span class="t" style="left:340px;top:-1px;color:#8f8f8f;font-size:12px">25</span>
<div class="a" style="left:403px;top:17px;width:2px;height:39px;background:#8c8c8c"></div>
<span class="t" style="left:406px;top:-1px;color:#8f8f8f;font-size:12px">30</span>
<div class="a" style="left:469px;top:17px;width:2px;height:39px;background:#8c8c8c"></div>
<span class="t" style="left:472px;top:-1px;color:#8f8f8f;font-size:12px">35</span>
<div class="a" style="left:535px;top:17px;width:2px;height:39px;background:#8c8c8c"></div>
<span class="t" style="left:538px;top:-1px;color:#8f8f8f;font-size:12px">40</span>
<div class="a" style="left:601px;top:17px;width:2px;height:39px;background:#8c8c8c"></div>
<span class="t" style="left:604px;top:-1px;color:#8f8f8f;font-size:12px">45</span>
<div class="a" style="left:667px;top:17px;width:2px;height:39px;background:#8c8c8c"></div>
<span class="t" style="left:670px;top:-1px;color:#8f8f8f;font-size:12px">50</span>
<div class="a" style="left:733px;top:17px;width:2px;height:39px;background:#8c8c8c"></div>
<span class="t" style="left:736px;top:-1px;color:#8f8f8f;font-size:12px">55</span>
<div class="a" style="left:799px;top:17px;width:2px;height:39px;background:#8c8c8c"></div>
<span class="t" style="left:802px;top:-1px;color:#8f8f8f;font-size:12px">60</span>
<div class="a" style="left:865px;top:17px;width:2px;height:39px;background:#8c8c8c"></div>
<span class="t" style="left:868px;top:-1px;color:#8f8f8f;font-size:12px">65</span>
<div class="a" style="left:931px;top:17px;width:2px;height:39px;background:#8c8c8c"></div>
<span class="t" style="left:934px;top:-1px;color:#8f8f8f;font-size:12px">70</span>
<div class="a" style="left:997px;top:17px;width:2px;height:39px;background:#8c8c8c"></div>
<span class="t" style="left:1000px;top:-1px;color:#8f8f8f;font-size:12px">75</span>
<div class="a" style="left:1063px;top:17px;width:2px;height:39px;background:#8c8c8c"></div>
<span class="t" style="left:1066px;top:-1px;color:#8f8f8f;font-size:12px">80</span>
<div class="a" style="left:1129px;top:17px;width:2px;height:39px;background:#8c8c8c"></div>
<span class="t" style="left:1132px;top:-1px;color:#8f8f8f;font-size:12px">85</span>
<div class="a" style="left:1195px;top:17px;width:2px;height:39px;background:#8c8c8c"></div>
<span class="t" style="left:1198px;top:-1px;color:#8f8f8f;font-size:12px">90</span>
<div class="a" style="left:1261px;top:17px;width:2px;height:39px;background:#8c8c8c"></div>
<span class="t" style="left:1264px;top:-1px;color:#8f8f8f;font-size:12px">95</span>
<div class="a" style="left:1327px;top:17px;width:2px;height:39px;background:#8c8c8c"></div>
<span class="t" style="left:1330px;top:-1px;color:#8f8f8f;font-size:12px">100</span>
<div class="a" style="left:1392px;top:17px;width:2px;height:39px;background:#8c8c8c"></div>
<span class="t" style="left:1395px;top:-1px;color:#8f8f8f;font-size:12px">105</span>
<div class="a" style="left:1458px;top:17px;width:2px;height:39px;background:#8c8c8c"></div>
<span class="t" style="left:1461px;top:-1px;color:#8f8f8f;font-size:12px">110</span>
<div class="a" style="left:1524px;top:17px;width:2px;height:39px;background:#8c8c8c"></div>
<span class="t" style="left:1527px;top:-1px;color:#8f8f8f;font-size:12px">115</span>
<div class="a" style="left:1590px;top:17px;width:2px;height:39px;background:#8c8c8c"></div>
<span class="t" style="left:1593px;top:-1px;color:#8f8f8f;font-size:12px">120</span>
<span class="t" style="left:24px;top:38px;color:#eeeeee;font-size:12px">1</span>
</div>
<div class="field" style="left:1632px;top:887px;width:88px;height:21px"></div>
<span class="t" style="left:1638px;top:890px;font-size:12px;color:#e8e8e8;">1</span>
<svg style="left:1729px;top:888px" width="18" height="14" viewBox="0 0 18 14" ><rect x="0.7" y="0" width="2" height="14" fill="#c8c8c8"/><path d="M10 1v12L3.500 7zM17 1v12L10.500 7z" fill="#c8c8c8"/></svg>
<svg style="left:1754px;top:888px" width="14" height="14" viewBox="0 0 14 14" ><rect x="0.500" y="0" width="2.200" height="14" fill="#c8c8c8"/><path d="M13 .5v13L3.500 7z" fill="#c8c8c8"/></svg>
<svg style="left:1776px;top:888px" width="14" height="14" viewBox="0 0 14 14" ><rect x="1" y="-1.500" width="1" height="17" fill="#c8c8c8"/><rect x="0" y="0.500" width="3.300" height="13" fill="#e2863e"/><path d="M14 .5v13L4.500 7z" fill="#c8c8c8"/></svg>
<svg style="left:1800px;top:888px" width="14" height="14" viewBox="0 0 14 14" ><path d="M13.500 0v14L0 7z" fill="#c8c8c8"/></svg>
<svg style="left:1823px;top:888px" width="14" height="14" viewBox="0 0 14 14" ><path d="M.5 0v14L14 7z" fill="#c8c8c8"/></svg>
<svg style="left:1846px;top:888px" width="14" height="14" viewBox="0 0 14 14" ><rect x="12" y="-1.500" width="1" height="17" fill="#c8c8c8"/><rect x="10.700" y="0.500" width="3.300" height="13" fill="#e2863e"/><path d="M0 .5v13L9.500 7z" fill="#c8c8c8"/></svg>
<svg style="left:1869px;top:888px" width="14" height="14" viewBox="0 0 14 14" ><rect x="11.300" y="0" width="2.200" height="14" fill="#c8c8c8"/><path d="M1 .5v13L10.500 7z" fill="#c8c8c8"/></svg>
<svg style="left:1890px;top:888px" width="18" height="14" viewBox="0 0 18 14" ><rect x="15.500" y="0" width="2" height="14" fill="#c8c8c8"/><path d="M1 1v12l7-6zM8 1v12l7-6z" fill="#c8c8c8"/></svg>
<div class="field" style="left:14px;top:948px;width:88px;height:27px"></div>
<span class="t" style="left:19px;top:954px;font-size:12px;color:#e8e8e8;">0</span>
<div class="field" style="left:110px;top:948px;width:88px;height:27px"></div>
<span class="t" style="left:115px;top:954px;font-size:12px;color:#e8e8e8;">0</span>
<div class="a" style="left:205px;top:948px;width:1013px;height:27px;background:#373737"></div>
<div class="a" style="left:211px;top:950px;width:612px;height:22px;background:#5d5d5d;border-radius:3px"></div>
<div class="a" style="left:215px;top:953px;width:16px;height:16px;background:#999999;border-radius:3px"></div>
<div class="a" style="left:803px;top:953px;width:16px;height:16px;background:#999999;border-radius:3px"></div>
<span class="t" style="left:235px;top:954px;font-size:12px;color:#e0e0e0;">0</span>
<span class="t" style="left:777px;top:954px;font-size:12px;color:#e0e0e0;">120</span>
<div class="field" style="left:1225px;top:948px;width:88px;height:27px"></div>
<span class="t" style="left:1230px;top:954px;font-size:12px;color:#e8e8e8;">120</span>
<div class="field" style="left:1321px;top:948px;width:88px;height:27px"></div>
<span class="t" style="left:1326px;top:954px;font-size:12px;color:#e8e8e8;">200</span>
<div class="a" style="left:1414px;top:951px;width:1px;height:20px;background:#7e7e7e"></div><div class="a" style="left:1413px;top:956px;width:3px;height:10px;background:#7e7e7e"></div>
<svg style="left:1429px;top:958px" width="10" height="6" viewBox="0 0 10 6" ><path d="M.5 .5h9L5 5z" fill="none" stroke="#a0a0a0" stroke-width="1"/></svg>
<div class="box" style="left:1446px;top:948px;width:102px;height:27px;border:1px solid #565656;border-radius:3px"></div>
<span class="t" style="left:1452px;top:954px;font-size:12px;color:#dddddd;">无角色集</span>
<svg style="left:1558px;top:958px" width="10" height="6" viewBox="0 0 10 6" ><path d="M.5 .5h9L5 5z" fill="none" stroke="#a0a0a0" stroke-width="1"/></svg>
<div class="box" style="left:1575px;top:948px;width:102px;height:27px;border:1px solid #565656;border-radius:3px"></div>
<span class="t" style="left:1581px;top:954px;font-size:12px;color:#dddddd;">无动画层</span>
<div class="a" style="left:1687px;top:951px;width:1px;height:20px;background:#7e7e7e"></div><div class="a" style="left:1686px;top:956px;width:3px;height:10px;background:#7e7e7e"></div>
<div class="dd" style="left:1701px;top:950px;width:103px;height:22px"></div>
<div class="a" style="left:1783px;top:950px;width:1px;height:22px;background:#555"></div>
<span class="t" style="left:1705px;top:954px;font-size:12px;color:#e0e0e0;letter-spacing:0.45px">24 fps</span>
<svg style="left:1789px;top:958px" width="10" height="6" viewBox="0 0 10 6" ><path d="M0 0h10L5 5.500z" fill="#d0d0d0"/></svg>
<svg style="left:1818px;top:953px" width="18" height="18" viewBox="0 0 18 18" ><path d="M5 9.500H4a3.500 3.500 0 0 1 0-7.500h8a3.800 3.800 0 0 1 3 6" fill="none" stroke="#c8c8c8" stroke-width="1.700" transform="translate(0,1)"/><path d="M9.500 .3l3.500 2.700-3.500 2.700z" fill="#c8c8c8"/><path d="M4.500 7.500l-3.500 3 3.500 3z" fill="#c8c8c8" transform="translate(0,0)"/><path d="M4 10.500h4" stroke="#c8c8c8" stroke-width="1.700"/><circle cx="13" cy="13" r="4.800" fill="#c8c8c8" stroke="#444" stroke-width="0.800"/><text x="13" y="16" font-family="Liberation Sans,sans-serif" font-weight="bold" font-size="8" text-anchor="middle" fill="#444">1</text></svg>
<div class="a" style="left:1848px;top:951px;width:1px;height:20px;background:#7e7e7e"></div><div class="a" style="left:1847px;top:956px;width:3px;height:10px;background:#7e7e7e"></div>
<div class="a" style="left:1859px;top:949px;width:23px;height:25px;background:#d3343b"></div>
<svg style="left:1861px;top:952px" width="19" height="19" viewBox="0 0 19 19" ><g fill="none" stroke="#3a3a3a" stroke-width="2.800"><path d="M2.600 7.500a7.200 7.200 0 0 1 13-2.300M16.400 11.500a7.200 7.200 0 0 1-13 2.300"/><path d="M3.500 9.500h12"/></g><path d="M2.600 7.500a7.200 7.200 0 0 1 13-2.300M16.400 11.500a7.200 7.200 0 0 1-13 2.300" fill="none" stroke="#c8c8c8" stroke-width="1.300"/><path d="M1.300 2.800l.3 5 4.700-1.300zM17.700 16.200l-.3-5-4.700 1.300z" fill="#c8c8c8" stroke="#3a3a3a" stroke-width="0.500"/><path d="M3.500 9.500h12" stroke="#c8c8c8" stroke-width="1.200"/><rect x="7.900" y="4.800" width="3.200" height="9.400" fill="#e8923c" stroke="#3a3a3a" stroke-width="0.900"/></svg>
<svg style="left:1890px;top:951px" width="19" height="20" viewBox="0 0 19 20" ><circle cx="4.700" cy="5" r="2.400" fill="none" stroke="#c8c8c8" stroke-width="1.200"/><circle cx="4.700" cy="5" r="3.700" fill="none" stroke="#c8c8c8" stroke-width="1.300" stroke-dasharray="1.300 1.600"/><circle cx="12.800" cy="5.700" r="1.700" fill="#e8923c"/><path d="M8.500 9.500l3.200-1.700 2.800 2 2.500-1.800M11.600 8.200l-1.200 4.500 3 2.300-.3 3.500M10.400 12.700l-2 2.300-3-.3" fill="none" stroke="#e8923c" stroke-width="2.100" stroke-linecap="round" stroke-linejoin="round"/></svg>
<span class="t" style="left:22px;top:990px;font-size:12px;color:#e4e4e4;letter-spacing:0.2px">MEL</span>
<div class="field" style="left:59px;top:987px;width:449px;height:22px"></div>
<div class="a" style="left:511px;top:994px;width:1px;height:8px;background-image:linear-gradient(#777 1px,transparent 1px);background-size:1px 3px"></div>
<div class="field" style="left:516px;top:986px;width:1371px;height:24px;border-radius:2px 0 0 2px"></div>
<svg style="left:1892px;top:988px" width="20" height="20" viewBox="0 0 20 20" ><g shape-rendering="crispEdges"><rect x="0" y="0" width="20" height="20" fill="#3c3c3c"/><rect x="1" y="1" width="18" height="3" fill="#c8c8c8"/><rect x="2" y="2" width="1" height="1" fill="#333"/><rect x="4" y="2" width="1" height="1" fill="#333"/><rect x="6" y="2" width="1" height="1" fill="#333"/><rect x="1" y="5" width="18" height="14" fill="#c8c8c8"/></g><text x="10" y="16" font-family="Liberation Sans,sans-serif" font-weight="bold" font-size="10.500" text-anchor="middle" fill="#333">{;}</text></svg>
<span class="t" style="left:24px;top:1021px;font-size:11px;color:#d0d0d0;">选择工具: 选择一个对象</span>

</div>
</body>
</html>
